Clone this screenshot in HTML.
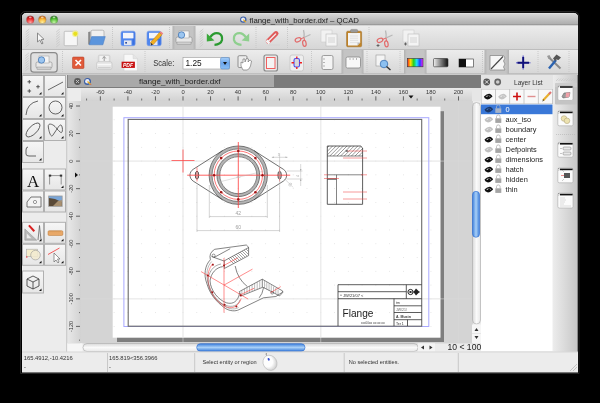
<!DOCTYPE html>
<html><head><meta charset="utf-8"><title>QCAD</title>
<style>
html,body{margin:0;padding:0;background:#000;width:600px;height:403px;overflow:hidden;}
svg{position:absolute;left:0;top:0;font-family:"Liberation Sans",sans-serif;will-change:transform;}
</style></head><body>
<svg width="600" height="403" viewBox="0 0 600 403">
<rect width="600" height="403" fill="#000"/>
<defs>
<linearGradient id="gTitle" x1="0" y1="0" x2="0" y2="1"><stop offset="0" stop-color="#d9d9d9"/><stop offset="1" stop-color="#ababab"/></linearGradient>
<linearGradient id="gTool" x1="0" y1="0" x2="0" y2="1"><stop offset="0" stop-color="#ececec"/><stop offset="1" stop-color="#d6d6d6"/></linearGradient>
<linearGradient id="gPress" x1="0" y1="0" x2="1" y2="0"><stop offset="0" stop-color="#b2b2b2"/><stop offset="0.12" stop-color="#c4c4c4"/><stop offset="0.88" stop-color="#c4c4c4"/><stop offset="1" stop-color="#b2b2b2"/></linearGradient>
<linearGradient id="gRulerH" x1="0" y1="0" x2="0" y2="1"><stop offset="0" stop-color="#e9e9e9"/><stop offset="1" stop-color="#d2d2d2"/></linearGradient>
<linearGradient id="gRulerV" x1="0" y1="0" x2="1" y2="0"><stop offset="0" stop-color="#e9e9e9"/><stop offset="1" stop-color="#d2d2d2"/></linearGradient>
<linearGradient id="gBtn" x1="0" y1="0" x2="0" y2="1"><stop offset="0" stop-color="#f6f6f6"/><stop offset="1" stop-color="#e6e6e6"/></linearGradient>
<linearGradient id="gRight" x1="0" y1="0" x2="1" y2="0"><stop offset="0" stop-color="#ececec"/><stop offset="1" stop-color="#c6c6c6"/></linearGradient>
<linearGradient id="gThumbV" x1="0" y1="0" x2="1" y2="0"><stop offset="0" stop-color="#3d7fdc"/><stop offset="0.5" stop-color="#a9d0f7"/><stop offset="1" stop-color="#3d7fdc"/></linearGradient>
<linearGradient id="gThumbH" x1="0" y1="0" x2="0" y2="1"><stop offset="0" stop-color="#3d7fdc"/><stop offset="0.5" stop-color="#a9d0f7"/><stop offset="1" stop-color="#3d7fdc"/></linearGradient>
<linearGradient id="gTrackV" x1="0" y1="0" x2="1" y2="0"><stop offset="0" stop-color="#d8d8d8"/><stop offset="0.5" stop-color="#fafafa"/><stop offset="1" stop-color="#e8e8e8"/></linearGradient>
<linearGradient id="gTrackH" x1="0" y1="0" x2="0" y2="1"><stop offset="0" stop-color="#d8d8d8"/><stop offset="0.5" stop-color="#fafafa"/><stop offset="1" stop-color="#e8e8e8"/></linearGradient>
<linearGradient id="gRainbow" x1="0" y1="0" x2="1" y2="0"><stop offset="0" stop-color="#ff2020"/><stop offset="0.2" stop-color="#ffe000"/><stop offset="0.4" stop-color="#20d020"/><stop offset="0.6" stop-color="#20e0ff"/><stop offset="0.8" stop-color="#2040ff"/><stop offset="1" stop-color="#ff20ff"/></linearGradient>
<linearGradient id="gGray" x1="0" y1="0" x2="1" y2="0"><stop offset="0" stop-color="#f0f0f0"/><stop offset="1" stop-color="#101010"/></linearGradient>
<radialGradient id="gRed" cx="0.5" cy="0.85" r="0.75"><stop offset="0" stop-color="#ffa8a8"/><stop offset="0.6" stop-color="#f03030"/><stop offset="1" stop-color="#b00808"/></radialGradient>
<radialGradient id="gYel" cx="0.5" cy="0.85" r="0.75"><stop offset="0" stop-color="#fff0a0"/><stop offset="0.6" stop-color="#f8b838"/><stop offset="1" stop-color="#c86008"/></radialGradient>
<radialGradient id="gGrn" cx="0.5" cy="0.85" r="0.75"><stop offset="0" stop-color="#c8f8a8"/><stop offset="0.6" stop-color="#58c038"/><stop offset="1" stop-color="#208010"/></radialGradient>
</defs>
<path d="M20.5 17 Q20.5 11.5 26 11.5 L573 11.5 Q579 11.5 579 17 L579 373.5 L20.5 373.5 Z" fill="none" stroke="#2e2e2e" stroke-width="0.8"/>
<path d="M22 17.5 Q22 13 26.5 13 L573.5 13 Q578 13 578 17.5 L578 372.5 L22 372.5 Z" fill="#ececec"/>
<path d="M22 17.5 Q22 13 26.5 13 L573.5 13 Q578 13 578 17.5 L578 25 L22 25 Z" fill="url(#gTitle)"/>
<line x1="26" y1="13.4" x2="574" y2="13.4" stroke="#e4e4e4" stroke-width="0.8"/>
<line x1="22" y1="25" x2="578" y2="25" stroke="#8a8a8a" stroke-width="1"/>
<circle cx="30.3" cy="19.7" r="3.9" fill="url(#gRed)" stroke="#8a8a8a" stroke-width="0.4"/>
<ellipse cx="30.3" cy="17.3" rx="1.4" ry="0.9" fill="#fff" opacity="0.6"/>
<circle cx="42.3" cy="19.7" r="3.9" fill="url(#gYel)" stroke="#8a8a8a" stroke-width="0.4"/>
<ellipse cx="42.3" cy="17.3" rx="1.4" ry="0.9" fill="#fff" opacity="0.6"/>
<circle cx="54" cy="19.7" r="3.9" fill="url(#gGrn)" stroke="#8a8a8a" stroke-width="0.4"/>
<ellipse cx="54" cy="17.3" rx="1.4" ry="0.9" fill="#fff" opacity="0.6"/>
<circle cx="243.3" cy="19.6" r="3.2" fill="#3a5ea8"/>
<circle cx="243.1" cy="19.4" r="2" fill="#e8ecf4"/>
<path d="M243.3 19.6 L245.8 22" stroke="#f0b020" stroke-width="1.2"/>
<text x="249.5" y="22.6" font-size="7.9" fill="#222" textLength="109.5" lengthAdjust="spacingAndGlyphs">flange_with_border.dxf – QCAD</text>
<rect x="22" y="25.5" width="556" height="23.5" fill="url(#gTool)"/>
<line x1="22" y1="49.5" x2="578" y2="49.5" stroke="#bdbdbd"/>
<rect x="22" y="50" width="556" height="24" fill="url(#gTool)"/>
<line x1="22" y1="74" x2="578" y2="74" stroke="#a8a8a8"/>
<path d="M25.7 32 L29.3 29 M25.7 34.5 L29.3 31.5 M25.7 37.0 L29.3 34.0 M25.7 39.5 L29.3 36.5 M25.7 42.0 L29.3 39.0 M25.7 44.5 L29.3 41.5 M25.7 47.0 L29.3 44.0 " stroke="#c6c6c6" stroke-width="0.8"/>
<path d="M56.2 32 L59.8 29 M56.2 34.5 L59.8 31.5 M56.2 37.0 L59.8 34.0 M56.2 39.5 L59.8 36.5 M56.2 42.0 L59.8 39.0 M56.2 44.5 L59.8 41.5 M56.2 47.0 L59.8 44.0 " stroke="#c6c6c6" stroke-width="0.8"/>
<line x1="112.5" y1="27" x2="112.5" y2="48" stroke="#c8c8c8" stroke-width="1" stroke-dasharray="1,1"/>
<line x1="169.5" y1="27" x2="169.5" y2="48" stroke="#c8c8c8" stroke-width="1" stroke-dasharray="1,1"/>
<path d="M199.7 32 L203.3 29 M199.7 34.5 L203.3 31.5 M199.7 37.0 L203.3 34.0 M199.7 39.5 L203.3 36.5 M199.7 42.0 L203.3 39.0 M199.7 44.5 L203.3 41.5 M199.7 47.0 L203.3 44.0 " stroke="#c6c6c6" stroke-width="0.8"/>
<line x1="256" y1="27" x2="256" y2="48" stroke="#c8c8c8" stroke-width="1" stroke-dasharray="1,1"/>
<line x1="287.5" y1="27" x2="287.5" y2="48" stroke="#c8c8c8" stroke-width="1" stroke-dasharray="1,1"/>
<line x1="369" y1="27" x2="369" y2="48" stroke="#c8c8c8" stroke-width="1" stroke-dasharray="1,1"/>
<rect x="172.5" y="26" width="23" height="23" fill="url(#gPress)"/>
<path d="M25.2 56 L28.8 53 M25.2 58.5 L28.8 55.5 M25.2 61.0 L28.8 58.0 M25.2 63.5 L28.8 60.5 M25.2 66.0 L28.8 63.0 M25.2 68.5 L28.8 65.5 M25.2 71.0 L28.8 68.0 " stroke="#c6c6c6" stroke-width="0.8"/>
<line x1="62.5" y1="51" x2="62.5" y2="73" stroke="#c8c8c8" stroke-width="1" stroke-dasharray="1,1"/>
<line x1="145" y1="51" x2="145" y2="73" stroke="#c8c8c8" stroke-width="1" stroke-dasharray="1,1"/>
<line x1="311.5" y1="51" x2="311.5" y2="73" stroke="#c8c8c8" stroke-width="1" stroke-dasharray="1,1"/>
<line x1="367" y1="51" x2="367" y2="73" stroke="#c8c8c8" stroke-width="1" stroke-dasharray="1,1"/>
<line x1="400" y1="51" x2="400" y2="73" stroke="#c8c8c8" stroke-width="1" stroke-dasharray="1,1"/>
<line x1="482.5" y1="51" x2="482.5" y2="73" stroke="#c8c8c8" stroke-width="1" stroke-dasharray="1,1"/>
<line x1="538" y1="51" x2="538" y2="73" stroke="#c8c8c8" stroke-width="1" stroke-dasharray="1,1"/>
<line x1="569" y1="51" x2="569" y2="73" stroke="#c8c8c8" stroke-width="1" stroke-dasharray="1,1"/>
<rect x="30.8" y="52.6" width="26.4" height="19.6" rx="3" fill="#e0e0e0" stroke="#8a8a8a" stroke-width="1.2"/>
<rect x="264" y="55" width="13.5" height="16" rx="2" fill="#eaeaea" stroke="#8a8a8a" stroke-width="1.2"/>
<rect x="290" y="55" width="13.5" height="16" rx="2" fill="#eeeeee" stroke="#c4c4c4" stroke-width="0.8"/>
<rect x="341.5" y="50" width="22" height="24" fill="url(#gPress)"/>
<rect x="404" y="50" width="22.5" height="24" fill="url(#gPress)"/>
<rect x="484.5" y="50" width="24.5" height="24" fill="url(#gPress)"/>
<path d="M37.5 33 L37.5 42 L39.8 40 L41.8 44 L43 43.3 L41.2 39.5 L44 39.3 Z" fill="#f8f8f8" stroke="#808080" stroke-width="0.9" stroke-linejoin="round"/>
<rect x="64.2" y="31.3" width="13.2" height="14.4" rx="0.8" fill="#f6f6f6" stroke="#b0b0b0" stroke-width="0.7"/>
<circle cx="75.3" cy="33.8" r="3.2" fill="#f4f080" opacity="0.8"/>
<circle cx="75.3" cy="33.8" r="2.1" fill="#e8e020"/>
<path d="M88.2 32 L90.5 31.5 L90.5 44.5 L88.2 44.5 Z" fill="#888"/>
<rect x="91" y="30.2" width="13" height="8" rx="1.5" fill="#f0f0f0" stroke="#9a9a9a" stroke-width="0.6"/>
<path d="M91.6 36.6 L105.3 36.6 L102.9 44.8 L89.2 44.8 Z" fill="#5b95dd" stroke="#4478c0" stroke-width="0.5"/>
<rect x="121" y="31.2" width="14.2" height="14.5" rx="1.8" fill="#4f86ee" stroke="#6f96e6" stroke-width="0.6"/>
<rect x="132.5" y="32.2" width="2" height="12.5" fill="#3a70e0"/>
<rect x="123" y="32.8" width="10.5" height="5.6" fill="#f2f4fa"/>
<rect x="124" y="40.4" width="7.5" height="4.8" fill="#e4e6ee"/>
<rect x="125.3" y="42.0" width="1.6" height="1.6" fill="#1a40a0"/>
<rect x="147" y="31.2" width="14.2" height="14.5" rx="1.8" fill="#4f86ee" stroke="#6f96e6" stroke-width="0.6"/>
<rect x="158.5" y="32.2" width="2" height="12.5" fill="#3a70e0"/>
<rect x="149" y="32.8" width="10.5" height="5.6" fill="#f2f4fa"/>
<rect x="150" y="40.4" width="7.5" height="4.8" fill="#e4e6ee"/>
<rect x="151.3" y="42.0" width="1.6" height="1.6" fill="#1a40a0"/>
<path d="M150.5 42.5 L159.5 32.5 L162 34.8 L153 44.8 Z" fill="#f2b020" stroke="#c07000" stroke-width="0.5"/>
<path d="M159.5 32.5 L160.8 31.2 L163.3 33.5 L162 34.8 Z" fill="#f08080"/>
<path d="M150.5 42.5 L153 44.8 L150.8 45.5 Z" fill="#333"/>
<rect x="176" y="37" width="16" height="6" rx="1.5" fill="#e8e8e8" stroke="#888" stroke-width="0.6"/>
<rect x="179" y="31" width="10" height="7" fill="#f4f4f4" stroke="#999" stroke-width="0.5"/>
<rect x="177" y="42" width="14" height="2.5" fill="#cfcfcf" stroke="#888" stroke-width="0.4"/>
<circle cx="181.5" cy="35" r="3.2" fill="#9cc6f0" stroke="#3a6fb0" stroke-width="0.7"/>
<path d="M210 37.5 Q213.5 32 218.5 33.3 Q222.8 35 222 40 Q220.8 44.5 214.5 44.8" fill="none" stroke="#2a9a30" stroke-width="2.3"/>
<path d="M206.8 33.6 L214.4 40.6 L206.8 41.4 Z" fill="#3aa83a"/>
<path d="M246 37.5 Q242.5 32 237.5 33.3 Q233.2 35 234 40 Q235.2 44.5 241.5 44.8" fill="none" stroke="#8ecf8e" stroke-width="2.3"/>
<path d="M249.2 33.6 L241.6 40.6 L249.2 41.4 Z" fill="#8ecf8e"/>
<path d="M268.3 41.3 L276 33.6" stroke="#e05a5a" stroke-width="5" stroke-linecap="round"/>
<path d="M268.3 41.3 L276 33.6" stroke="#f4f4f4" stroke-width="1.3"/>
<path d="M266.5 40.5 L269.5 43.5" stroke="#f2f2f2" stroke-width="2.5"/>
<path d="M268 45 L280 45" stroke="#d0d0d0" stroke-width="0.6"/>
<path d="M303.5 30 Q304.5 34 304 37.5 M310.5 34.5 L304 37.5" fill="none" stroke="#b8b8b8" stroke-width="1.3"/>
<ellipse cx="298" cy="39.8" rx="3" ry="1.9" transform="rotate(-25 298 39.8)" fill="none" stroke="#e26a6a" stroke-width="1.2"/>
<ellipse cx="304.4" cy="43.4" rx="1.7" ry="3" transform="rotate(-10 304.4 43.4)" fill="none" stroke="#e26a6a" stroke-width="1.2"/>
<path d="M300.5 39 L304 37.5 L304.5 40.5" fill="none" stroke="#e26a6a" stroke-width="1"/>
<rect x="321" y="30" width="11" height="12" fill="#f2f2f2" stroke="#ccc" stroke-width="0.6"/>
<rect x="326" y="34" width="11" height="12" fill="#f4f4f4" stroke="#bbb" stroke-width="0.6"/>
<rect x="328" y="37" width="7" height="6" fill="#e4e4e4"/>
<rect x="346.6" y="31.2" width="15" height="15.6" rx="1.2" fill="#c08428" stroke="#9a6418" stroke-width="0.5"/>
<path d="M348 33 H360.2 V42.5 L357.5 45.4 H348 Z" fill="#f4f4f4"/>
<path d="M357.5 45.4 L357.5 42.5 L360.2 42.5 Z" fill="#bbb"/>
<rect x="350.5" y="29.4" width="7.2" height="3.2" rx="1.2" fill="#9a9a9a" stroke="#777" stroke-width="0.4"/>
<line x1="350" y1="36" x2="358" y2="36" stroke="#d4d4d4" stroke-width="0.6"/>
<line x1="350" y1="38.2" x2="358" y2="38.2" stroke="#d4d4d4" stroke-width="0.6"/>
<line x1="350" y1="40.4" x2="358" y2="40.4" stroke="#d4d4d4" stroke-width="0.6"/>
<line x1="350" y1="42.6" x2="358" y2="42.6" stroke="#d4d4d4" stroke-width="0.6"/>
<path d="M385.5 30.5 Q386.5 34.5 386 38.0 M392.5 35.0 L386 38.0" fill="none" stroke="#b8b8b8" stroke-width="1.3"/>
<ellipse cx="380" cy="40.3" rx="3" ry="1.9" transform="rotate(-25 380 40.3)" fill="none" stroke="#e26a6a" stroke-width="1.2"/>
<ellipse cx="386.4" cy="43.9" rx="1.7" ry="3" transform="rotate(-10 386.4 43.9)" fill="none" stroke="#e26a6a" stroke-width="1.2"/>
<path d="M382.5 39.5 L386 38.0 L386.5 41.0" fill="none" stroke="#e26a6a" stroke-width="1"/>
<path d="M376.5 45.5 h3 M378 44.0 v3" stroke="#444" stroke-width="0.7"/>
<rect x="403" y="30" width="11" height="12" fill="#f2f2f2" stroke="#ccc" stroke-width="0.6"/>
<rect x="408" y="34" width="11" height="12" fill="#f4f4f4" stroke="#bbb" stroke-width="0.6"/>
<rect x="410" y="37" width="7" height="6" fill="#e4e4e4"/>
<path d="M404 44 h3 M405.5 42.5 v3" stroke="#444" stroke-width="0.7"/>
<rect x="36" y="62" width="16" height="6" rx="1.5" fill="#e8e8e8" stroke="#888" stroke-width="0.6"/>
<rect x="39" y="56" width="10" height="7" fill="#f4f4f4" stroke="#999" stroke-width="0.5"/>
<rect x="37" y="67" width="14" height="2.5" fill="#cfcfcf" stroke="#888" stroke-width="0.4"/>
<circle cx="41.5" cy="60" r="3.2" fill="#9cc6f0" stroke="#3a6fb0" stroke-width="0.7"/>
<rect x="72.5" y="57" width="11.5" height="11.5" rx="1" fill="#e05a3a" stroke="#b03a20" stroke-width="0.5"/>
<path d="M75.5 60 L81 65.5 M81 60 L75.5 65.5" stroke="#fff" stroke-width="1.6"/>
<rect x="98.3" y="55" width="11.7" height="7.5" rx="1.5" fill="#dcdcdc" stroke="#c4c4c4" stroke-width="0.5"/>
<rect x="99.5" y="56" width="9.3" height="5.5" fill="#f2f2f2"/>
<path d="M104.2 56.5 V61 M102.5 58.5 L104.2 56.5 L105.9 58.5" stroke="#9a9a9a" stroke-width="1" fill="none"/>
<rect x="96.6" y="61.7" width="15.4" height="7.9" rx="2" fill="#e8e8e8" stroke="#c0c0c0" stroke-width="0.6"/>
<rect x="97.5" y="64" width="13.6" height="1.2" fill="#f8f8f8"/>
<rect x="98" y="67" width="12.6" height="1.5" fill="#cfcfcf"/>
<path d="M124 54.3 L133 54.3 L137.4 58.7 L137.4 70.8 L124 70.8 Z" fill="#f8f8f8" stroke="#d0d0d0" stroke-width="0.6"/>
<path d="M133 54.3 L133 58.7 L137.4 58.7" fill="#e4e4e4" stroke="#d0d0d0" stroke-width="0.4"/>
<rect x="121.6" y="61.7" width="13.3" height="6.2" fill="#c81010"/>
<text x="123" y="66.8" font-size="5.2" font-weight="bold" font-style="italic" fill="#fff" textLength="10" lengthAdjust="spacingAndGlyphs">PDF</text>
<text x="153.3" y="66" font-size="8.6" fill="#333" textLength="21" lengthAdjust="spacingAndGlyphs">Scale:</text>
<rect x="183" y="57.5" width="46.5" height="11.5" fill="#fff" stroke="#9a9a9a" stroke-width="0.6"/>
<defs><linearGradient id="gDrop" x1="0" y1="0" x2="0" y2="1"><stop offset="0" stop-color="#a8d0f8"/><stop offset="0.5" stop-color="#6aa4ec"/><stop offset="1" stop-color="#8cc0f4"/></linearGradient></defs>
<rect x="220.5" y="57.5" width="9" height="11.5" rx="1.5" fill="url(#gDrop)" stroke="#4a7fc0" stroke-width="0.5"/>
<path d="M223 62 L227 62 L225 65 Z" fill="#111"/>
<text x="185.5" y="66.3" font-size="8.3" fill="#111">1.25</text>
<rect x="238" y="55.7" width="9" height="11.8" rx="1.2" fill="#ececec" stroke="#7a7a7a" stroke-width="0.8"/>
<path d="M243 70 Q240 66 241 62 L243 63 L243 59 L245 59 L245 62 L246.5 58.5 L248.5 59 L248 62 L250 60 L251.5 61 L250.5 66 Q249 70 247 70 Z" fill="#fff" stroke="#666" stroke-width="0.6"/>
<rect x="266.5" y="57.5" width="8.5" height="11" fill="#f4f4f4" stroke="#f06060" stroke-width="1"/>
<rect x="294" y="58.5" width="5.5" height="8.5" rx="1.8" fill="#d8d8d8" stroke="#4a4af0" stroke-width="1.1"/>
<path d="M296.8 56.5 v2 M296.8 67 v2 M291.5 62.8 h2.5 M299.5 62.8 h2.5" stroke="#f02020" stroke-width="1.4"/>
<rect x="322" y="55.5" width="11" height="14" rx="1.5" fill="#f4f4f4" stroke="#888" stroke-width="0.8"/>
<path d="M323 59 h2 M323 62.5 h2 M323 66 h2" stroke="#888" stroke-width="0.6"/>
<rect x="346" y="57" width="14.5" height="11" rx="1.5" fill="#f8f8f8" stroke="#888" stroke-width="0.8"/>
<path d="M350 58 v2 M353.2 58 v2 M356.5 58 v2" stroke="#888" stroke-width="0.6"/>
<rect x="376" y="55" width="9" height="11" fill="#f4f4f4" stroke="#999" stroke-width="0.6"/>
<circle cx="384" cy="64" r="3.8" fill="#8cc0f0" stroke="#3a70b0" stroke-width="0.8"/>
<path d="M386.5 66.5 L390.5 70" stroke="#333" stroke-width="1.4"/>
<rect x="407.5" y="58.5" width="15.5" height="8.3" fill="url(#gRainbow)" stroke="#333" stroke-width="0.6"/>
<rect x="433.5" y="58.5" width="14.5" height="8.3" rx="1" fill="url(#gGray)" stroke="#333" stroke-width="0.6"/>
<rect x="459" y="59" width="14.5" height="8" fill="#fff" stroke="#333" stroke-width="0.6"/>
<rect x="459" y="59" width="7" height="8" fill="#111"/>
<path d="M490 55.5 H503.5 L505 58 L503.5 61 L505 64 L503.5 67 L505 70 H490 Z" fill="#f6f6f6" stroke="#8a8a8a" stroke-width="0.8"/>
<path d="M491 69 L503 56.5" stroke="#444" stroke-width="1.1"/>
<path d="M516 62.7 h14.5 M523.2 55.5 v14" stroke="#8080d0" stroke-width="1.6"/>
<path d="M517.5 62.7 h11.5 M523.2 57 v11" stroke="#10107a" stroke-width="1.9"/>
<path d="M549 57.5 L560.5 68.5" stroke="#8a8a8a" stroke-width="2"/>
<path d="M547 56 L549.5 55 L551 58 L548.5 59 Z" fill="#999"/>
<path d="M549 68.5 L556 60" stroke="#2a62b0" stroke-width="2.4"/>
<path d="M553 58.5 L556.5 54.5 L561 57.5 L558.5 60 L556 59.5 L555.5 61.5 Z" fill="#555"/>
<rect x="22" y="75" width="45" height="277" fill="#ececec"/>
<rect x="67" y="75" width="414" height="13" fill="#7b7b7b"/>
<rect x="67" y="75" width="207" height="12" fill="#a9a9a9"/>
<line x1="67.4" y1="75" x2="67.4" y2="87" stroke="#777" stroke-width="0.8"/>
<circle cx="77.5" cy="81.5" r="3.4" fill="#5a5a5a"/>
<path d="M76 80 L79 83 M79 80 L76 83" stroke="#c8c8c8" stroke-width="0.9"/>
<circle cx="87.5" cy="81.5" r="3.5" fill="#3a5ea8"/>
<circle cx="87.3" cy="81.3" r="2.2" fill="#e8ecf4"/>
<path d="M87.5 81.5 L90.5 84.2" stroke="#f0b020" stroke-width="1.4"/>
<circle cx="90.8" cy="84.5" r="0.6" fill="#e06040"/>
<text x="139" y="83.6" font-size="8.1" fill="#222">flange_with_border.dxf</text>
<rect x="67" y="88" width="406" height="264" fill="#d4d4d4"/>
<rect x="81" y="88" width="391" height="13" fill="url(#gRulerH)"/>
<rect x="67" y="101" width="14" height="243" fill="url(#gRulerV)"/>
<rect x="67" y="88" width="14" height="13" fill="#ececec"/>
<line x1="66.75" y1="88" x2="66.75" y2="352" stroke="#c4c4c4" stroke-width="1"/>
<line x1="86.58" y1="98.5" x2="86.58" y2="100.5" stroke="#555" stroke-width="0.8"/>
<line x1="100.35" y1="96.3" x2="100.35" y2="100.5" stroke="#444" stroke-width="0.8"/>
<text x="100.35" y="93.6" font-size="5.8" fill="#333" text-anchor="middle">-60</text>
<line x1="114.12" y1="98.5" x2="114.12" y2="100.5" stroke="#555" stroke-width="0.8"/>
<line x1="127.9" y1="96.3" x2="127.9" y2="100.5" stroke="#444" stroke-width="0.8"/>
<text x="127.9" y="93.6" font-size="5.8" fill="#333" text-anchor="middle">-40</text>
<line x1="141.68" y1="98.5" x2="141.68" y2="100.5" stroke="#555" stroke-width="0.8"/>
<line x1="155.45" y1="96.3" x2="155.45" y2="100.5" stroke="#444" stroke-width="0.8"/>
<text x="155.45" y="93.6" font-size="5.8" fill="#333" text-anchor="middle">-20</text>
<line x1="169.22" y1="98.5" x2="169.22" y2="100.5" stroke="#555" stroke-width="0.8"/>
<line x1="183" y1="96.3" x2="183" y2="100.5" stroke="#444" stroke-width="0.8"/>
<text x="183" y="93.6" font-size="5.8" fill="#333" text-anchor="middle">0</text>
<line x1="196.78" y1="98.5" x2="196.78" y2="100.5" stroke="#555" stroke-width="0.8"/>
<line x1="210.55" y1="96.3" x2="210.55" y2="100.5" stroke="#444" stroke-width="0.8"/>
<text x="210.55" y="93.6" font-size="5.8" fill="#333" text-anchor="middle">20</text>
<line x1="224.32" y1="98.5" x2="224.32" y2="100.5" stroke="#555" stroke-width="0.8"/>
<line x1="238.1" y1="96.3" x2="238.1" y2="100.5" stroke="#444" stroke-width="0.8"/>
<text x="238.1" y="93.6" font-size="5.8" fill="#333" text-anchor="middle">40</text>
<line x1="251.88" y1="98.5" x2="251.88" y2="100.5" stroke="#555" stroke-width="0.8"/>
<line x1="265.65" y1="96.3" x2="265.65" y2="100.5" stroke="#444" stroke-width="0.8"/>
<text x="265.65" y="93.6" font-size="5.8" fill="#333" text-anchor="middle">60</text>
<line x1="279.43" y1="98.5" x2="279.43" y2="100.5" stroke="#555" stroke-width="0.8"/>
<line x1="293.2" y1="96.3" x2="293.2" y2="100.5" stroke="#444" stroke-width="0.8"/>
<text x="293.2" y="93.6" font-size="5.8" fill="#333" text-anchor="middle">80</text>
<line x1="306.98" y1="98.5" x2="306.98" y2="100.5" stroke="#555" stroke-width="0.8"/>
<line x1="320.75" y1="96.3" x2="320.75" y2="100.5" stroke="#444" stroke-width="0.8"/>
<text x="320.75" y="93.6" font-size="5.8" fill="#333" text-anchor="middle">100</text>
<line x1="334.52" y1="98.5" x2="334.52" y2="100.5" stroke="#555" stroke-width="0.8"/>
<line x1="348.3" y1="96.3" x2="348.3" y2="100.5" stroke="#444" stroke-width="0.8"/>
<text x="348.3" y="93.6" font-size="5.8" fill="#333" text-anchor="middle">120</text>
<line x1="362.07" y1="98.5" x2="362.07" y2="100.5" stroke="#555" stroke-width="0.8"/>
<line x1="375.85" y1="96.3" x2="375.85" y2="100.5" stroke="#444" stroke-width="0.8"/>
<text x="375.85" y="93.6" font-size="5.8" fill="#333" text-anchor="middle">140</text>
<line x1="389.62" y1="98.5" x2="389.62" y2="100.5" stroke="#555" stroke-width="0.8"/>
<line x1="403.4" y1="96.3" x2="403.4" y2="100.5" stroke="#444" stroke-width="0.8"/>
<text x="403.4" y="93.6" font-size="5.8" fill="#333" text-anchor="middle">160</text>
<line x1="417.17" y1="98.5" x2="417.17" y2="100.5" stroke="#555" stroke-width="0.8"/>
<line x1="430.95" y1="96.3" x2="430.95" y2="100.5" stroke="#444" stroke-width="0.8"/>
<text x="430.95" y="93.6" font-size="5.8" fill="#333" text-anchor="middle">180</text>
<line x1="444.72" y1="98.5" x2="444.72" y2="100.5" stroke="#555" stroke-width="0.8"/>
<line x1="458.5" y1="96.3" x2="458.5" y2="100.5" stroke="#444" stroke-width="0.8"/>
<text x="458.5" y="93.6" font-size="5.8" fill="#333" text-anchor="middle">200</text>
<line x1="76" y1="106" x2="80" y2="106" stroke="#444" stroke-width="0.8"/>
<text x="0" y="0" font-size="5.6" fill="#333" text-anchor="middle" transform="translate(73.3 106) rotate(-90)">40</text>
<line x1="79" y1="119.78" x2="80" y2="119.78" stroke="#333" stroke-width="0.7"/>
<line x1="76" y1="133.55" x2="80" y2="133.55" stroke="#444" stroke-width="0.8"/>
<text x="0" y="0" font-size="5.6" fill="#333" text-anchor="middle" transform="translate(73.3 133.55) rotate(-90)">20</text>
<line x1="79" y1="147.32" x2="80" y2="147.32" stroke="#333" stroke-width="0.7"/>
<line x1="76" y1="161.1" x2="80" y2="161.1" stroke="#444" stroke-width="0.8"/>
<text x="0" y="0" font-size="5.6" fill="#333" text-anchor="middle" transform="translate(73.3 161.1) rotate(-90)">0</text>
<line x1="79" y1="174.88" x2="80" y2="174.88" stroke="#333" stroke-width="0.7"/>
<line x1="76" y1="188.65" x2="80" y2="188.65" stroke="#444" stroke-width="0.8"/>
<text x="0" y="0" font-size="5.6" fill="#333" text-anchor="middle" transform="translate(73.3 188.65) rotate(-90)">-20</text>
<line x1="79" y1="202.42" x2="80" y2="202.42" stroke="#333" stroke-width="0.7"/>
<line x1="76" y1="216.2" x2="80" y2="216.2" stroke="#444" stroke-width="0.8"/>
<text x="0" y="0" font-size="5.6" fill="#333" text-anchor="middle" transform="translate(73.3 216.2) rotate(-90)">-40</text>
<line x1="79" y1="229.97" x2="80" y2="229.97" stroke="#333" stroke-width="0.7"/>
<line x1="76" y1="243.75" x2="80" y2="243.75" stroke="#444" stroke-width="0.8"/>
<text x="0" y="0" font-size="5.6" fill="#333" text-anchor="middle" transform="translate(73.3 243.75) rotate(-90)">-60</text>
<line x1="79" y1="257.52" x2="80" y2="257.52" stroke="#333" stroke-width="0.7"/>
<line x1="76" y1="271.3" x2="80" y2="271.3" stroke="#444" stroke-width="0.8"/>
<text x="0" y="0" font-size="5.6" fill="#333" text-anchor="middle" transform="translate(73.3 271.3) rotate(-90)">-80</text>
<line x1="79" y1="285.07" x2="80" y2="285.07" stroke="#333" stroke-width="0.7"/>
<line x1="76" y1="298.85" x2="80" y2="298.85" stroke="#444" stroke-width="0.8"/>
<text x="0" y="0" font-size="5.6" fill="#333" text-anchor="middle" transform="translate(73.3 298.85) rotate(-90)">-100</text>
<line x1="79" y1="312.62" x2="80" y2="312.62" stroke="#333" stroke-width="0.7"/>
<line x1="76" y1="326.4" x2="80" y2="326.4" stroke="#444" stroke-width="0.8"/>
<text x="0" y="0" font-size="5.6" fill="#333" text-anchor="middle" transform="translate(73.3 326.4) rotate(-90)">-120</text>
<line x1="79" y1="340.17" x2="80" y2="340.17" stroke="#333" stroke-width="0.7"/>
<path d="M408.5 95.5 h5 l-2.5 3 z" fill="#111"/>
<path d="M75 172.5 v5 l3 -2.5 z" fill="#111"/>
<rect x="117" y="111.2" width="327" height="230.8" fill="#7e7e7e"/>
<rect x="112.7" y="106.7" width="327.8" height="231" fill="#ffffff"/>
<rect x="472" y="88" width="9" height="13" fill="#e6e6e6"/>
<rect x="472.5" y="102.5" width="8" height="221.5" rx="4" fill="url(#gTrackV)" stroke="#a8a8a8" stroke-width="0.6"/>
<rect x="472.5" y="191.3" width="7" height="46" rx="3.5" fill="url(#gThumbV)" stroke="#2a6ad0" stroke-width="0.6"/>
<rect x="472" y="324.5" width="9" height="18.5" fill="#f6f6f6"/>
<line x1="472" y1="333.5" x2="481" y2="333.5" stroke="#dedede" stroke-width="0.6"/>
<path d="M474.5 331 h4 l-2 -3 z M474.5 336 h4 l-2 3 z" fill="#333"/>
<rect x="67" y="343.5" width="406" height="8.5" fill="#ececec"/>
<rect x="67.5" y="343.3" width="15" height="8.5" fill="#f6f6f6"/>
<line x1="68" y1="343.3" x2="80" y2="343.3" stroke="#e0e0e0" stroke-width="0.6"/>
<rect x="83" y="343.5" width="335" height="8" rx="4" fill="url(#gTrackH)" stroke="#a8a8a8" stroke-width="0.6"/>
<rect x="196.7" y="343.7" width="108.3" height="7.5" rx="3.7" fill="url(#gThumbH)" stroke="#2a6ad0" stroke-width="0.6"/>
<rect x="418" y="343.3" width="17" height="8" fill="#f4f4f4"/>
<path d="M424 345.5 v4 l-3 -2 z M429.5 345.5 v4 l3 -2 z" fill="#333"/>
<text x="447.5" y="350" font-size="8.6" fill="#222">10 &lt; 100</text>
<rect x="481" y="75" width="72" height="277" fill="#ececec"/>
<rect x="481" y="75" width="72" height="14" fill="#e4e4e4"/>
<circle cx="486.7" cy="82" r="3.4" fill="#555"/>
<path d="M485 80.3 L488.4 83.7 M488.4 80.3 L485 83.7" stroke="#eee" stroke-width="0.9"/>
<circle cx="497.7" cy="82" r="3.4" fill="#666"/>
<circle cx="497.7" cy="82" r="1.8" fill="#ccc"/>
<text x="514" y="85" font-size="6.9" fill="#333" textLength="28.5" lengthAdjust="spacingAndGlyphs">Layer List</text>
<rect x="481" y="89" width="72" height="15" fill="#bdbdbd"/>
<rect x="481.5" y="89.5" width="13.5" height="14" fill="#f8f8f8"/>
<rect x="495.8" y="89.5" width="13.5" height="14" fill="#f8f8f8"/>
<rect x="510.1" y="89.5" width="13.5" height="14" fill="#f8f8f8"/>
<rect x="524.4" y="89.5" width="13.5" height="14" fill="#f8f8f8"/>
<rect x="538.7" y="89.5" width="13.5" height="14" fill="#f8f8f8"/>
<path d="M483.9 96.5 Q487.2 93.1 490.2 93.9 Q492.2 94.9 492.5 96.5 Q489.2 99.9 486.7 99.3 Q484.2 98.5 483.9 96.5 Z" fill="#111"/>
<path d="M485.59999999999997 96.2 Q488.2 94.7 490.8 96.2 Q488.2 97.7 485.59999999999997 96.2 Z" fill="#e8e8e8"/>
<circle cx="488.5" cy="96.6" r="1.1" fill="#111"/>
<path d="M498.2 96.5 Q501.5 93.1 504.5 93.9 Q506.5 94.9 506.8 96.5 Q503.5 99.9 501.0 99.3 Q498.5 98.5 498.2 96.5 Z" fill="#c4c4c4"/>
<path d="M499.9 96.2 Q502.5 94.7 505.1 96.2 Q502.5 97.7 499.9 96.2 Z" fill="#f2f2f2"/>
<circle cx="502.8" cy="96.6" r="1.1" fill="#c4c4c4"/>
<path d="M513 96.5 h8 M517 92.5 v8" stroke="#cc1010" stroke-width="1.6"/>
<path d="M527.5 96.5 h8" stroke="#e09090" stroke-width="1.4"/>
<path d="M543 100.5 L549.5 93.5" stroke="#e8b030" stroke-width="2.2"/>
<path d="M549 94 L551 92" stroke="#e07070" stroke-width="2.2"/>
<path d="M542 101.8 L543.5 99.2 L544.3 100 Z" fill="#333"/>
<rect x="481" y="104" width="71.5" height="247" fill="#ffffff"/>
<rect x="481" y="104.5" width="71.5" height="9.7" fill="#3a78d8"/>
<path d="M484.5 109.5 Q487.8 106.1 490.8 106.9 Q492.8 107.9 493.1 109.5 Q489.8 112.9 487.3 112.3 Q484.8 111.5 484.5 109.5 Z" fill="#1c3868"/>
<path d="M486.2 109.2 Q488.8 107.7 491.40000000000003 109.2 Q488.8 110.7 486.2 109.2 Z" fill="#4a80d0"/>
<circle cx="489.1" cy="109.6" r="1.1" fill="#1c3868"/>
<rect x="495.3" y="108.3" width="6" height="4.6" fill="#a8b4c8"/>
<path d="M496.5 108.3 v-1.6 a1.8 1.8 0 0 1 3.6 0 v1.6" fill="none" stroke="#a8b4c8" stroke-width="0.8"/>
<text x="505.6" y="112.2" font-size="7.4" fill="#fff">0</text>
<path d="M484.5 119.5 Q487.8 116.1 490.8 116.9 Q492.8 117.9 493.1 119.5 Q489.8 122.9 487.3 122.3 Q484.8 121.5 484.5 119.5 Z" fill="#c0c0c0"/>
<path d="M486.2 119.2 Q488.8 117.7 491.40000000000003 119.2 Q488.8 120.7 486.2 119.2 Z" fill="#f0f0f0"/>
<circle cx="489.1" cy="119.6" r="1.1" fill="#c0c0c0"/>
<rect x="495.3" y="118.3" width="6" height="4.6" fill="#a4a4a4"/>
<path d="M496.5 118.3 v-1.6 a1.8 1.8 0 0 1 3.6 0 v1.6" fill="none" stroke="#b4b4b4" stroke-width="0.8"/>
<text x="505.6" y="122.2" font-size="7.4" fill="#222">aux_iso</text>
<path d="M484.5 129.5 Q487.8 126.1 490.8 126.9 Q492.8 127.9 493.1 129.5 Q489.8 132.9 487.3 132.3 Q484.8 131.5 484.5 129.5 Z" fill="#c0c0c0"/>
<path d="M486.2 129.2 Q488.8 127.7 491.40000000000003 129.2 Q488.8 130.7 486.2 129.2 Z" fill="#f0f0f0"/>
<circle cx="489.1" cy="129.6" r="1.1" fill="#c0c0c0"/>
<rect x="495.3" y="128.3" width="6" height="4.6" fill="#a4a4a4"/>
<path d="M496.5 128.3 v-1.6 a1.8 1.8 0 0 1 3.6 0 v1.6" fill="none" stroke="#b4b4b4" stroke-width="0.8"/>
<text x="505.6" y="132.2" font-size="7.4" fill="#222">boundary</text>
<path d="M484.5 139.5 Q487.8 136.1 490.8 136.9 Q492.8 137.9 493.1 139.5 Q489.8 142.9 487.3 142.3 Q484.8 141.5 484.5 139.5 Z" fill="#111"/>
<path d="M486.2 139.2 Q488.8 137.7 491.40000000000003 139.2 Q488.8 140.7 486.2 139.2 Z" fill="#f4f4f4"/>
<circle cx="489.1" cy="139.6" r="1.1" fill="#111"/>
<rect x="495.3" y="138.3" width="6" height="4.6" fill="#a4a4a4"/>
<path d="M496.5 138.3 v-1.6 a1.8 1.8 0 0 1 3.6 0 v1.6" fill="none" stroke="#b4b4b4" stroke-width="0.8"/>
<text x="505.6" y="142.2" font-size="7.4" fill="#222">center</text>
<path d="M484.5 149.5 Q487.8 146.1 490.8 146.9 Q492.8 147.9 493.1 149.5 Q489.8 152.9 487.3 152.3 Q484.8 151.5 484.5 149.5 Z" fill="#c0c0c0"/>
<path d="M486.2 149.2 Q488.8 147.7 491.40000000000003 149.2 Q488.8 150.7 486.2 149.2 Z" fill="#f0f0f0"/>
<circle cx="489.1" cy="149.6" r="1.1" fill="#c0c0c0"/>
<rect x="495.3" y="148.3" width="6" height="4.6" fill="#a4a4a4"/>
<path d="M496.5 148.3 v-1.6 a1.8 1.8 0 0 1 3.6 0 v1.6" fill="none" stroke="#b4b4b4" stroke-width="0.8"/>
<text x="505.6" y="152.2" font-size="7.4" fill="#222">Defpoints</text>
<path d="M484.5 159.5 Q487.8 156.1 490.8 156.9 Q492.8 157.9 493.1 159.5 Q489.8 162.9 487.3 162.3 Q484.8 161.5 484.5 159.5 Z" fill="#111"/>
<path d="M486.2 159.2 Q488.8 157.7 491.40000000000003 159.2 Q488.8 160.7 486.2 159.2 Z" fill="#f4f4f4"/>
<circle cx="489.1" cy="159.6" r="1.1" fill="#111"/>
<rect x="495.3" y="158.3" width="6" height="4.6" fill="#a4a4a4"/>
<path d="M496.5 158.3 v-1.6 a1.8 1.8 0 0 1 3.6 0 v1.6" fill="none" stroke="#b4b4b4" stroke-width="0.8"/>
<text x="505.6" y="162.2" font-size="7.4" fill="#222">dimensions</text>
<path d="M484.5 169.5 Q487.8 166.1 490.8 166.9 Q492.8 167.9 493.1 169.5 Q489.8 172.9 487.3 172.3 Q484.8 171.5 484.5 169.5 Z" fill="#111"/>
<path d="M486.2 169.2 Q488.8 167.7 491.40000000000003 169.2 Q488.8 170.7 486.2 169.2 Z" fill="#f4f4f4"/>
<circle cx="489.1" cy="169.6" r="1.1" fill="#111"/>
<rect x="495.3" y="168.3" width="6" height="4.6" fill="#a4a4a4"/>
<path d="M496.5 168.3 v-1.6 a1.8 1.8 0 0 1 3.6 0 v1.6" fill="none" stroke="#b4b4b4" stroke-width="0.8"/>
<text x="505.6" y="172.2" font-size="7.4" fill="#222">hatch</text>
<path d="M484.5 179.5 Q487.8 176.1 490.8 176.9 Q492.8 177.9 493.1 179.5 Q489.8 182.9 487.3 182.3 Q484.8 181.5 484.5 179.5 Z" fill="#111"/>
<path d="M486.2 179.2 Q488.8 177.7 491.40000000000003 179.2 Q488.8 180.7 486.2 179.2 Z" fill="#f4f4f4"/>
<circle cx="489.1" cy="179.6" r="1.1" fill="#111"/>
<rect x="495.3" y="178.3" width="6" height="4.6" fill="#a4a4a4"/>
<path d="M496.5 178.3 v-1.6 a1.8 1.8 0 0 1 3.6 0 v1.6" fill="none" stroke="#b4b4b4" stroke-width="0.8"/>
<text x="505.6" y="182.2" font-size="7.4" fill="#222">hidden</text>
<path d="M484.5 189.5 Q487.8 186.1 490.8 186.9 Q492.8 187.9 493.1 189.5 Q489.8 192.9 487.3 192.3 Q484.8 191.5 484.5 189.5 Z" fill="#111"/>
<path d="M486.2 189.2 Q488.8 187.7 491.40000000000003 189.2 Q488.8 190.7 486.2 189.2 Z" fill="#f4f4f4"/>
<circle cx="489.1" cy="189.6" r="1.1" fill="#111"/>
<rect x="495.3" y="188.3" width="6" height="4.6" fill="#a4a4a4"/>
<path d="M496.5 188.3 v-1.6 a1.8 1.8 0 0 1 3.6 0 v1.6" fill="none" stroke="#b4b4b4" stroke-width="0.8"/>
<text x="505.6" y="192.2" font-size="7.4" fill="#222">thin</text>
<rect x="553" y="75" width="25" height="277" fill="url(#gRight)"/>
<line x1="577.5" y1="75" x2="577.5" y2="352" stroke="#8a8a8a" stroke-width="1"/>
<path d="M556.0 81 L558.5 78.5 M558.5 81 L561.0 78.5 M561.0 81 L563.5 78.5 M563.5 81 L566.0 78.5 M566.0 81 L568.5 78.5 M568.5 81 L571.0 78.5 M571.0 81 L573.5 78.5 M573.5 81 L576.0 78.5 " stroke="#c4c4c4" stroke-width="0.7"/>
<rect x="555" y="83" width="22" height="21.5" rx="1" fill="#c4c4c4"/>
<rect x="555" y="83" width="22" height="4" fill="#d4d4d4" opacity="0.6"/>
<rect x="557.8" y="85.6" width="15.2" height="14.8" rx="1.5" fill="#fbfbfb" stroke="#a8a8a8" stroke-width="0.6"/>
<rect x="560" y="86.19999999999999" width="12.6" height="1.6" fill="#111"/>
<rect x="558.4" y="86.19999999999999" width="1.4" height="1.6" fill="#fff" stroke="#888" stroke-width="0.3"/>
<rect x="557.8" y="111" width="15.2" height="14.8" rx="1.5" fill="#fbfbfb" stroke="#a8a8a8" stroke-width="0.6"/>
<rect x="560" y="111.6" width="12.6" height="1.6" fill="#111"/>
<rect x="558.4" y="111.6" width="1.4" height="1.6" fill="#fff" stroke="#888" stroke-width="0.3"/>
<rect x="557.8" y="142.4" width="15.2" height="14.8" rx="1.5" fill="#fbfbfb" stroke="#a8a8a8" stroke-width="0.6"/>
<rect x="560" y="143.0" width="12.6" height="1.6" fill="#111"/>
<rect x="558.4" y="143.0" width="1.4" height="1.6" fill="#fff" stroke="#888" stroke-width="0.3"/>
<rect x="557.8" y="168" width="15.2" height="14.8" rx="1.5" fill="#fbfbfb" stroke="#a8a8a8" stroke-width="0.6"/>
<rect x="560" y="168.6" width="12.6" height="1.6" fill="#111"/>
<rect x="558.4" y="168.6" width="1.4" height="1.6" fill="#fff" stroke="#888" stroke-width="0.3"/>
<rect x="557.8" y="193.2" width="15.2" height="14.8" rx="1.5" fill="#fbfbfb" stroke="#a8a8a8" stroke-width="0.6"/>
<rect x="560" y="193.79999999999998" width="12.6" height="1.6" fill="#111"/>
<rect x="558.4" y="193.79999999999998" width="1.4" height="1.6" fill="#fff" stroke="#888" stroke-width="0.3"/>
<path d="M562 96.5 L564 93 L570 92.5 L569 97 L563 98 Z" fill="#9a9a9a" stroke="#555" stroke-width="0.5"/>
<path d="M566 92.7 L570 92.5 L569 97 L565.5 97.5 Z" fill="#f0a0a8"/>
<circle cx="564" cy="118.5" r="2.8" fill="#ece2b0" stroke="#a89a70" stroke-width="0.5"/><circle cx="567" cy="120.8" r="2.8" fill="#ece2b0" stroke="#a89a70" stroke-width="0.5"/>
<line x1="556" y1="134.5" x2="576" y2="134.5" stroke="#b8b8b8" stroke-width="0.7" stroke-dasharray="1,1"/>
<rect x="563" y="147" width="8" height="3" rx="1" fill="#e8e8e8" stroke="#777" stroke-width="0.5"/><rect x="563" y="152" width="8" height="3" rx="1" fill="#e8e8e8" stroke="#777" stroke-width="0.5"/>
<path d="M560.5 148.5 h1 M560.5 153.5 h1" stroke="#777" stroke-width="0.8"/>
<rect x="564" y="173" width="6" height="5" fill="#555"/><path d="M561 175.5 h3" stroke="#e04040" stroke-width="0.6"/><path d="M564 172 L562 170 M564 179 L562 181" stroke="#888" stroke-width="0.4"/>
<path d="M560 198 h5 M560 200 h6 M560 202 h5 M560 204 h4 M560 206 h11" stroke="#c8c8c8" stroke-width="0.6"/>
<line x1="22" y1="352" x2="578" y2="352" stroke="#d8d8d8"/>
<text x="23.7" y="359.5" font-size="5.85" fill="#333">165.4912,-10.4216</text>
<text x="24" y="368.5" font-size="5.6" fill="#333">-</text>
<line x1="107.5" y1="353" x2="107.5" y2="372" stroke="#c8c8c8"/>
<text x="109" y="359.8" font-size="5.8" fill="#333">165.819&lt;356.3966</text>
<text x="109" y="368.5" font-size="5.6" fill="#333">-</text>
<line x1="194.7" y1="353" x2="194.7" y2="372" stroke="#c8c8c8"/>
<text x="202.5" y="364" font-size="5.6" fill="#333">Select entity or region</text>
<defs><radialGradient id="gMouse" cx="0.4" cy="0.35" r="0.7"><stop offset="0.5" stop-color="#fdfdfd"/><stop offset="1" stop-color="#c8c8c8"/></radialGradient></defs>
<ellipse cx="270" cy="362.8" rx="6.8" ry="7.8" transform="rotate(-28 270 362.8)" fill="url(#gMouse)" stroke="#b0b0b0" stroke-width="0.5"/>
<path d="M266.5 355.5 Q265.5 353.5 266.8 353" fill="none" stroke="#777" stroke-width="0.8"/>
<ellipse cx="268.7" cy="359.3" rx="1" ry="1.4" transform="rotate(-28 268.7 359.3)" fill="#3a50d0"/>
<line x1="344.2" y1="353" x2="344.2" y2="372" stroke="#c8c8c8"/>
<text x="348.7" y="364.2" font-size="5.6" fill="#333">No selected entities.</text>
<line x1="458.3" y1="353" x2="458.3" y2="372" stroke="#c8c8c8"/>
<path d="M570 371 L577 364 M573 371 L577 367" stroke="#aaa" stroke-width="0.6"/>
<rect x="22.5" y="75.5" width="21" height="21" fill="url(#gBtn)" stroke="#b0b0b0" stroke-width="1"/>
<path d="M39 94.5 L41.5 92 L41.5 94.5 Z" fill="#111"/>
<rect x="44.5" y="75.5" width="21" height="21" fill="url(#gBtn)" stroke="#b0b0b0" stroke-width="1"/>
<path d="M61 94.5 L63.5 92 L63.5 94.5 Z" fill="#111"/>
<rect x="22.5" y="97.5" width="21" height="21" fill="url(#gBtn)" stroke="#b0b0b0" stroke-width="1"/>
<path d="M39 116.5 L41.5 114 L41.5 116.5 Z" fill="#111"/>
<rect x="44.5" y="97.5" width="21" height="21" fill="url(#gBtn)" stroke="#b0b0b0" stroke-width="1"/>
<path d="M61 116.5 L63.5 114 L63.5 116.5 Z" fill="#111"/>
<rect x="22.5" y="119.5" width="21" height="21" fill="url(#gBtn)" stroke="#b0b0b0" stroke-width="1"/>
<path d="M39 138.5 L41.5 136 L41.5 138.5 Z" fill="#111"/>
<rect x="44.5" y="119.5" width="21" height="21" fill="url(#gBtn)" stroke="#b0b0b0" stroke-width="1"/>
<path d="M61 138.5 L63.5 136 L63.5 138.5 Z" fill="#111"/>
<rect x="22.5" y="141.5" width="21" height="21" fill="url(#gBtn)" stroke="#b0b0b0" stroke-width="1"/>
<path d="M39 160.5 L41.5 158 L41.5 160.5 Z" fill="#111"/>
<rect x="22.5" y="169.0" width="21" height="21" fill="url(#gBtn)" stroke="#b0b0b0" stroke-width="1"/>
<rect x="44.5" y="169.0" width="21" height="21" fill="url(#gBtn)" stroke="#b0b0b0" stroke-width="1"/>
<path d="M61 188.0 L63.5 185.5 L63.5 188.0 Z" fill="#111"/>
<rect x="22.5" y="191.0" width="21" height="21" fill="url(#gBtn)" stroke="#b0b0b0" stroke-width="1"/>
<rect x="44.5" y="191.0" width="21" height="21" fill="url(#gBtn)" stroke="#b0b0b0" stroke-width="1"/>
<rect x="22.5" y="222.3" width="21" height="21" fill="url(#gBtn)" stroke="#b0b0b0" stroke-width="1"/>
<path d="M39 241.3 L41.5 238.8 L41.5 241.3 Z" fill="#111"/>
<rect x="44.5" y="222.3" width="21" height="21" fill="url(#gBtn)" stroke="#b0b0b0" stroke-width="1"/>
<path d="M61 241.3 L63.5 238.8 L63.5 241.3 Z" fill="#111"/>
<rect x="22.5" y="244.3" width="21" height="21" fill="url(#gBtn)" stroke="#b0b0b0" stroke-width="1"/>
<path d="M39 263.3 L41.5 260.8 L41.5 263.3 Z" fill="#111"/>
<rect x="44.5" y="244.3" width="21" height="21" fill="url(#gBtn)" stroke="#b0b0b0" stroke-width="1"/>
<path d="M61 263.3 L63.5 260.8 L63.5 263.3 Z" fill="#111"/>
<rect x="22.5" y="271.0" width="21" height="22" fill="url(#gBtn)" stroke="#b0b0b0" stroke-width="1"/>
<path d="M39 291.0 L41.5 288.5 L41.5 291.0 Z" fill="#111"/>
<path d="M27.5 81.8 h3.6 M29.3 80 v3.6 M27.5 91 h3.6 M29.3 89.2 v3.6 M36.2 86.7 h3.6 M38 84.9 v3.6" stroke="#444" stroke-width="0.9"/>
<line x1="48" y1="90" x2="63" y2="82" stroke="#444" stroke-width="0.8"/>
<path d="M26 115 Q27 103 38 101" fill="none" stroke="#555" stroke-width="0.9"/>
<circle cx="55.5" cy="107.5" r="6.5" fill="none" stroke="#555" stroke-width="0.9"/>
<ellipse cx="33" cy="130" rx="9" ry="4" transform="rotate(-45 33 130)" fill="none" stroke="#555" stroke-width="0.9"/>
<path d="M57 129 C54 124 47.5 122 48.3 127 C49 132 51 138.5 53 135 C54.5 133 55.5 131 57 129 C59 126 60.5 123.5 61.8 126 C63 129 62.5 134 60.5 132.3 C59 131 58 130 57 129" fill="none" stroke="#555" stroke-width="0.9"/>
<path d="M28 147 Q26 147 26 150 L26 154 Q26 156 29 156 L36 156" fill="none" stroke="#555" stroke-width="0.9"/>
<text x="27" y="187" font-family="Liberation Serif, serif" font-size="17" fill="#111">A</text>
<path d="M49.6 184.5 V175.6 H61.2 V184.5" fill="none" stroke="#8a8a8a" stroke-width="0.9"/>
<rect x="48.8" y="174.6" width="2.4" height="2" fill="#333"/><rect x="59.8" y="174.6" width="2.4" height="2" fill="#333"/>
<path d="M27 207 L27 202 L31 197 L41 197 L41 207 Z" fill="#f4f4f4" stroke="#555" stroke-width="0.8"/>
<circle cx="35" cy="202" r="1.6" fill="#fff" stroke="#555" stroke-width="0.6"/>
<rect x="48.2" y="195.6" width="14.4" height="11.2" fill="#999"/>
<rect x="49" y="196.4" width="12.8" height="9.6" fill="#7aa6d8"/>
<path d="M49 198 L55 199 L61.8 202 L61.8 206 L49 206 Z" fill="#5a4a38"/>
<path d="M53 206 L58 201 L61.8 200 L61.8 206 Z" fill="#a89070"/>
<path d="M24.8 228.9 L24.8 240.2 L36.7 240.2 Z" fill="#b8b8b8" stroke="#888" stroke-width="0.5"/>
<path d="M26.8 233.5 L26.8 238.3 L31.5 238.3 Z" fill="#eaeaea"/>
<path d="M28.9 225.4 L34.3 231.3" stroke="#d82020" stroke-width="2"/>
<path d="M39.5 225.5 L38 240 M39.5 225.5 L41 240" fill="none" stroke="#555" stroke-width="0.7"/>
<rect x="48" y="230.7" width="14.9" height="4.8" rx="1.2" fill="#e8a868" stroke="#b87838" stroke-width="0.5"/>
<path d="M50 230.8 v1.3 M52 230.8 v1.3 M54 230.8 v1.3 M56 230.8 v1.3 M58 230.8 v1.3 M60 230.8 v1.3" stroke="#b87838" stroke-width="0.4"/>
<rect x="26.5" y="249.2" width="10.8" height="7.5" fill="#f6eecc" stroke="#aaa" stroke-width="0.6"/>
<circle cx="35.5" cy="255.1" r="4.8" fill="#f2ead0" fill-opacity="0.85" stroke="#999" stroke-width="0.6"/>
<circle cx="26.8" cy="257" r="0.8" fill="#f04040"/>
<line x1="48" y1="254.5" x2="59.5" y2="248" stroke="#f04848" stroke-width="0.9"/>
<path d="M54 253 L54 262 L56 260 L58 263 L59 262 L57.5 259 L60 259 Z" fill="#fff" stroke="#555" stroke-width="0.6"/>
<path d="M27 279 L33 276 L39 279 L39 286 L33 289 L27 286 Z M27 279 L33 282 L39 279 M33 282 L33 289" fill="none" stroke="#333" stroke-width="0.8"/>
<rect x="113.72" y="119.38" width="0.8" height="0.8" fill="#dadada"/>
<rect x="113.72" y="133.15" width="0.8" height="0.8" fill="#dadada"/>
<rect x="113.72" y="146.92" width="0.8" height="0.8" fill="#dadada"/>
<rect x="113.72" y="160.7" width="0.8" height="0.8" fill="#dadada"/>
<rect x="113.72" y="174.47" width="0.8" height="0.8" fill="#dadada"/>
<rect x="113.72" y="188.25" width="0.8" height="0.8" fill="#dadada"/>
<rect x="113.72" y="202.02" width="0.8" height="0.8" fill="#dadada"/>
<rect x="113.72" y="215.8" width="0.8" height="0.8" fill="#dadada"/>
<rect x="113.72" y="229.57" width="0.8" height="0.8" fill="#dadada"/>
<rect x="113.72" y="243.35" width="0.8" height="0.8" fill="#dadada"/>
<rect x="113.72" y="257.12" width="0.8" height="0.8" fill="#dadada"/>
<rect x="113.72" y="270.9" width="0.8" height="0.8" fill="#dadada"/>
<rect x="113.72" y="284.68" width="0.8" height="0.8" fill="#dadada"/>
<rect x="113.72" y="298.45" width="0.8" height="0.8" fill="#dadada"/>
<rect x="113.72" y="312.23" width="0.8" height="0.8" fill="#dadada"/>
<rect x="113.72" y="326" width="0.8" height="0.8" fill="#dadada"/>
<rect x="127.5" y="119.38" width="0.8" height="0.8" fill="#dadada"/>
<rect x="127.5" y="133.15" width="0.8" height="0.8" fill="#dadada"/>
<rect x="127.5" y="146.92" width="0.8" height="0.8" fill="#dadada"/>
<rect x="127.5" y="160.7" width="0.8" height="0.8" fill="#dadada"/>
<rect x="127.5" y="174.47" width="0.8" height="0.8" fill="#dadada"/>
<rect x="127.5" y="188.25" width="0.8" height="0.8" fill="#dadada"/>
<rect x="127.5" y="202.02" width="0.8" height="0.8" fill="#dadada"/>
<rect x="127.5" y="215.8" width="0.8" height="0.8" fill="#dadada"/>
<rect x="127.5" y="229.57" width="0.8" height="0.8" fill="#dadada"/>
<rect x="127.5" y="243.35" width="0.8" height="0.8" fill="#dadada"/>
<rect x="127.5" y="257.12" width="0.8" height="0.8" fill="#dadada"/>
<rect x="127.5" y="270.9" width="0.8" height="0.8" fill="#dadada"/>
<rect x="127.5" y="284.68" width="0.8" height="0.8" fill="#dadada"/>
<rect x="127.5" y="298.45" width="0.8" height="0.8" fill="#dadada"/>
<rect x="127.5" y="312.23" width="0.8" height="0.8" fill="#dadada"/>
<rect x="127.5" y="326" width="0.8" height="0.8" fill="#dadada"/>
<rect x="141.28" y="119.38" width="0.8" height="0.8" fill="#dadada"/>
<rect x="141.28" y="133.15" width="0.8" height="0.8" fill="#dadada"/>
<rect x="141.28" y="146.92" width="0.8" height="0.8" fill="#dadada"/>
<rect x="141.28" y="160.7" width="0.8" height="0.8" fill="#dadada"/>
<rect x="141.28" y="174.47" width="0.8" height="0.8" fill="#dadada"/>
<rect x="141.28" y="188.25" width="0.8" height="0.8" fill="#dadada"/>
<rect x="141.28" y="202.02" width="0.8" height="0.8" fill="#dadada"/>
<rect x="141.28" y="215.8" width="0.8" height="0.8" fill="#dadada"/>
<rect x="141.28" y="229.57" width="0.8" height="0.8" fill="#dadada"/>
<rect x="141.28" y="243.35" width="0.8" height="0.8" fill="#dadada"/>
<rect x="141.28" y="257.12" width="0.8" height="0.8" fill="#dadada"/>
<rect x="141.28" y="270.9" width="0.8" height="0.8" fill="#dadada"/>
<rect x="141.28" y="284.68" width="0.8" height="0.8" fill="#dadada"/>
<rect x="141.28" y="298.45" width="0.8" height="0.8" fill="#dadada"/>
<rect x="141.28" y="312.23" width="0.8" height="0.8" fill="#dadada"/>
<rect x="141.28" y="326" width="0.8" height="0.8" fill="#dadada"/>
<rect x="155.05" y="119.38" width="0.8" height="0.8" fill="#dadada"/>
<rect x="155.05" y="133.15" width="0.8" height="0.8" fill="#dadada"/>
<rect x="155.05" y="146.92" width="0.8" height="0.8" fill="#dadada"/>
<rect x="155.05" y="160.7" width="0.8" height="0.8" fill="#dadada"/>
<rect x="155.05" y="174.47" width="0.8" height="0.8" fill="#dadada"/>
<rect x="155.05" y="188.25" width="0.8" height="0.8" fill="#dadada"/>
<rect x="155.05" y="202.02" width="0.8" height="0.8" fill="#dadada"/>
<rect x="155.05" y="215.8" width="0.8" height="0.8" fill="#dadada"/>
<rect x="155.05" y="229.57" width="0.8" height="0.8" fill="#dadada"/>
<rect x="155.05" y="243.35" width="0.8" height="0.8" fill="#dadada"/>
<rect x="155.05" y="257.12" width="0.8" height="0.8" fill="#dadada"/>
<rect x="155.05" y="270.9" width="0.8" height="0.8" fill="#dadada"/>
<rect x="155.05" y="284.68" width="0.8" height="0.8" fill="#dadada"/>
<rect x="155.05" y="298.45" width="0.8" height="0.8" fill="#dadada"/>
<rect x="155.05" y="312.23" width="0.8" height="0.8" fill="#dadada"/>
<rect x="155.05" y="326" width="0.8" height="0.8" fill="#dadada"/>
<rect x="168.82" y="119.38" width="0.8" height="0.8" fill="#dadada"/>
<rect x="168.82" y="133.15" width="0.8" height="0.8" fill="#dadada"/>
<rect x="168.82" y="146.92" width="0.8" height="0.8" fill="#dadada"/>
<rect x="168.82" y="160.7" width="0.8" height="0.8" fill="#dadada"/>
<rect x="168.82" y="174.47" width="0.8" height="0.8" fill="#dadada"/>
<rect x="168.82" y="188.25" width="0.8" height="0.8" fill="#dadada"/>
<rect x="168.82" y="202.02" width="0.8" height="0.8" fill="#dadada"/>
<rect x="168.82" y="215.8" width="0.8" height="0.8" fill="#dadada"/>
<rect x="168.82" y="229.57" width="0.8" height="0.8" fill="#dadada"/>
<rect x="168.82" y="243.35" width="0.8" height="0.8" fill="#dadada"/>
<rect x="168.82" y="257.12" width="0.8" height="0.8" fill="#dadada"/>
<rect x="168.82" y="270.9" width="0.8" height="0.8" fill="#dadada"/>
<rect x="168.82" y="284.68" width="0.8" height="0.8" fill="#dadada"/>
<rect x="168.82" y="298.45" width="0.8" height="0.8" fill="#dadada"/>
<rect x="168.82" y="312.23" width="0.8" height="0.8" fill="#dadada"/>
<rect x="168.82" y="326" width="0.8" height="0.8" fill="#dadada"/>
<rect x="182.6" y="119.38" width="0.8" height="0.8" fill="#dadada"/>
<rect x="182.6" y="133.15" width="0.8" height="0.8" fill="#dadada"/>
<rect x="182.6" y="146.92" width="0.8" height="0.8" fill="#dadada"/>
<rect x="182.6" y="160.7" width="0.8" height="0.8" fill="#dadada"/>
<rect x="182.6" y="174.47" width="0.8" height="0.8" fill="#dadada"/>
<rect x="182.6" y="188.25" width="0.8" height="0.8" fill="#dadada"/>
<rect x="182.6" y="202.02" width="0.8" height="0.8" fill="#dadada"/>
<rect x="182.6" y="215.8" width="0.8" height="0.8" fill="#dadada"/>
<rect x="182.6" y="229.57" width="0.8" height="0.8" fill="#dadada"/>
<rect x="182.6" y="243.35" width="0.8" height="0.8" fill="#dadada"/>
<rect x="182.6" y="257.12" width="0.8" height="0.8" fill="#dadada"/>
<rect x="182.6" y="270.9" width="0.8" height="0.8" fill="#dadada"/>
<rect x="182.6" y="284.68" width="0.8" height="0.8" fill="#dadada"/>
<rect x="182.6" y="298.45" width="0.8" height="0.8" fill="#dadada"/>
<rect x="182.6" y="312.23" width="0.8" height="0.8" fill="#dadada"/>
<rect x="182.6" y="326" width="0.8" height="0.8" fill="#dadada"/>
<rect x="196.38" y="119.38" width="0.8" height="0.8" fill="#dadada"/>
<rect x="196.38" y="133.15" width="0.8" height="0.8" fill="#dadada"/>
<rect x="196.38" y="146.92" width="0.8" height="0.8" fill="#dadada"/>
<rect x="196.38" y="160.7" width="0.8" height="0.8" fill="#dadada"/>
<rect x="196.38" y="174.47" width="0.8" height="0.8" fill="#dadada"/>
<rect x="196.38" y="188.25" width="0.8" height="0.8" fill="#dadada"/>
<rect x="196.38" y="202.02" width="0.8" height="0.8" fill="#dadada"/>
<rect x="196.38" y="215.8" width="0.8" height="0.8" fill="#dadada"/>
<rect x="196.38" y="229.57" width="0.8" height="0.8" fill="#dadada"/>
<rect x="196.38" y="243.35" width="0.8" height="0.8" fill="#dadada"/>
<rect x="196.38" y="257.12" width="0.8" height="0.8" fill="#dadada"/>
<rect x="196.38" y="270.9" width="0.8" height="0.8" fill="#dadada"/>
<rect x="196.38" y="284.68" width="0.8" height="0.8" fill="#dadada"/>
<rect x="196.38" y="298.45" width="0.8" height="0.8" fill="#dadada"/>
<rect x="196.38" y="312.23" width="0.8" height="0.8" fill="#dadada"/>
<rect x="196.38" y="326" width="0.8" height="0.8" fill="#dadada"/>
<rect x="210.15" y="119.38" width="0.8" height="0.8" fill="#dadada"/>
<rect x="210.15" y="133.15" width="0.8" height="0.8" fill="#dadada"/>
<rect x="210.15" y="146.92" width="0.8" height="0.8" fill="#dadada"/>
<rect x="210.15" y="160.7" width="0.8" height="0.8" fill="#dadada"/>
<rect x="210.15" y="174.47" width="0.8" height="0.8" fill="#dadada"/>
<rect x="210.15" y="188.25" width="0.8" height="0.8" fill="#dadada"/>
<rect x="210.15" y="202.02" width="0.8" height="0.8" fill="#dadada"/>
<rect x="210.15" y="215.8" width="0.8" height="0.8" fill="#dadada"/>
<rect x="210.15" y="229.57" width="0.8" height="0.8" fill="#dadada"/>
<rect x="210.15" y="243.35" width="0.8" height="0.8" fill="#dadada"/>
<rect x="210.15" y="257.12" width="0.8" height="0.8" fill="#dadada"/>
<rect x="210.15" y="270.9" width="0.8" height="0.8" fill="#dadada"/>
<rect x="210.15" y="284.68" width="0.8" height="0.8" fill="#dadada"/>
<rect x="210.15" y="298.45" width="0.8" height="0.8" fill="#dadada"/>
<rect x="210.15" y="312.23" width="0.8" height="0.8" fill="#dadada"/>
<rect x="210.15" y="326" width="0.8" height="0.8" fill="#dadada"/>
<rect x="223.92" y="119.38" width="0.8" height="0.8" fill="#dadada"/>
<rect x="223.92" y="133.15" width="0.8" height="0.8" fill="#dadada"/>
<rect x="223.92" y="146.92" width="0.8" height="0.8" fill="#dadada"/>
<rect x="223.92" y="160.7" width="0.8" height="0.8" fill="#dadada"/>
<rect x="223.92" y="174.47" width="0.8" height="0.8" fill="#dadada"/>
<rect x="223.92" y="188.25" width="0.8" height="0.8" fill="#dadada"/>
<rect x="223.92" y="202.02" width="0.8" height="0.8" fill="#dadada"/>
<rect x="223.92" y="215.8" width="0.8" height="0.8" fill="#dadada"/>
<rect x="223.92" y="229.57" width="0.8" height="0.8" fill="#dadada"/>
<rect x="223.92" y="243.35" width="0.8" height="0.8" fill="#dadada"/>
<rect x="223.92" y="257.12" width="0.8" height="0.8" fill="#dadada"/>
<rect x="223.92" y="270.9" width="0.8" height="0.8" fill="#dadada"/>
<rect x="223.92" y="284.68" width="0.8" height="0.8" fill="#dadada"/>
<rect x="223.92" y="298.45" width="0.8" height="0.8" fill="#dadada"/>
<rect x="223.92" y="312.23" width="0.8" height="0.8" fill="#dadada"/>
<rect x="223.92" y="326" width="0.8" height="0.8" fill="#dadada"/>
<rect x="237.7" y="119.38" width="0.8" height="0.8" fill="#dadada"/>
<rect x="237.7" y="133.15" width="0.8" height="0.8" fill="#dadada"/>
<rect x="237.7" y="146.92" width="0.8" height="0.8" fill="#dadada"/>
<rect x="237.7" y="160.7" width="0.8" height="0.8" fill="#dadada"/>
<rect x="237.7" y="174.47" width="0.8" height="0.8" fill="#dadada"/>
<rect x="237.7" y="188.25" width="0.8" height="0.8" fill="#dadada"/>
<rect x="237.7" y="202.02" width="0.8" height="0.8" fill="#dadada"/>
<rect x="237.7" y="215.8" width="0.8" height="0.8" fill="#dadada"/>
<rect x="237.7" y="229.57" width="0.8" height="0.8" fill="#dadada"/>
<rect x="237.7" y="243.35" width="0.8" height="0.8" fill="#dadada"/>
<rect x="237.7" y="257.12" width="0.8" height="0.8" fill="#dadada"/>
<rect x="237.7" y="270.9" width="0.8" height="0.8" fill="#dadada"/>
<rect x="237.7" y="284.68" width="0.8" height="0.8" fill="#dadada"/>
<rect x="237.7" y="298.45" width="0.8" height="0.8" fill="#dadada"/>
<rect x="237.7" y="312.23" width="0.8" height="0.8" fill="#dadada"/>
<rect x="237.7" y="326" width="0.8" height="0.8" fill="#dadada"/>
<rect x="251.47" y="119.38" width="0.8" height="0.8" fill="#dadada"/>
<rect x="251.47" y="133.15" width="0.8" height="0.8" fill="#dadada"/>
<rect x="251.47" y="146.92" width="0.8" height="0.8" fill="#dadada"/>
<rect x="251.47" y="160.7" width="0.8" height="0.8" fill="#dadada"/>
<rect x="251.47" y="174.47" width="0.8" height="0.8" fill="#dadada"/>
<rect x="251.47" y="188.25" width="0.8" height="0.8" fill="#dadada"/>
<rect x="251.47" y="202.02" width="0.8" height="0.8" fill="#dadada"/>
<rect x="251.47" y="215.8" width="0.8" height="0.8" fill="#dadada"/>
<rect x="251.47" y="229.57" width="0.8" height="0.8" fill="#dadada"/>
<rect x="251.47" y="243.35" width="0.8" height="0.8" fill="#dadada"/>
<rect x="251.47" y="257.12" width="0.8" height="0.8" fill="#dadada"/>
<rect x="251.47" y="270.9" width="0.8" height="0.8" fill="#dadada"/>
<rect x="251.47" y="284.68" width="0.8" height="0.8" fill="#dadada"/>
<rect x="251.47" y="298.45" width="0.8" height="0.8" fill="#dadada"/>
<rect x="251.47" y="312.23" width="0.8" height="0.8" fill="#dadada"/>
<rect x="251.47" y="326" width="0.8" height="0.8" fill="#dadada"/>
<rect x="265.25" y="119.38" width="0.8" height="0.8" fill="#dadada"/>
<rect x="265.25" y="133.15" width="0.8" height="0.8" fill="#dadada"/>
<rect x="265.25" y="146.92" width="0.8" height="0.8" fill="#dadada"/>
<rect x="265.25" y="160.7" width="0.8" height="0.8" fill="#dadada"/>
<rect x="265.25" y="174.47" width="0.8" height="0.8" fill="#dadada"/>
<rect x="265.25" y="188.25" width="0.8" height="0.8" fill="#dadada"/>
<rect x="265.25" y="202.02" width="0.8" height="0.8" fill="#dadada"/>
<rect x="265.25" y="215.8" width="0.8" height="0.8" fill="#dadada"/>
<rect x="265.25" y="229.57" width="0.8" height="0.8" fill="#dadada"/>
<rect x="265.25" y="243.35" width="0.8" height="0.8" fill="#dadada"/>
<rect x="265.25" y="257.12" width="0.8" height="0.8" fill="#dadada"/>
<rect x="265.25" y="270.9" width="0.8" height="0.8" fill="#dadada"/>
<rect x="265.25" y="284.68" width="0.8" height="0.8" fill="#dadada"/>
<rect x="265.25" y="298.45" width="0.8" height="0.8" fill="#dadada"/>
<rect x="265.25" y="312.23" width="0.8" height="0.8" fill="#dadada"/>
<rect x="265.25" y="326" width="0.8" height="0.8" fill="#dadada"/>
<rect x="279.03" y="119.38" width="0.8" height="0.8" fill="#dadada"/>
<rect x="279.03" y="133.15" width="0.8" height="0.8" fill="#dadada"/>
<rect x="279.03" y="146.92" width="0.8" height="0.8" fill="#dadada"/>
<rect x="279.03" y="160.7" width="0.8" height="0.8" fill="#dadada"/>
<rect x="279.03" y="174.47" width="0.8" height="0.8" fill="#dadada"/>
<rect x="279.03" y="188.25" width="0.8" height="0.8" fill="#dadada"/>
<rect x="279.03" y="202.02" width="0.8" height="0.8" fill="#dadada"/>
<rect x="279.03" y="215.8" width="0.8" height="0.8" fill="#dadada"/>
<rect x="279.03" y="229.57" width="0.8" height="0.8" fill="#dadada"/>
<rect x="279.03" y="243.35" width="0.8" height="0.8" fill="#dadada"/>
<rect x="279.03" y="257.12" width="0.8" height="0.8" fill="#dadada"/>
<rect x="279.03" y="270.9" width="0.8" height="0.8" fill="#dadada"/>
<rect x="279.03" y="284.68" width="0.8" height="0.8" fill="#dadada"/>
<rect x="279.03" y="298.45" width="0.8" height="0.8" fill="#dadada"/>
<rect x="279.03" y="312.23" width="0.8" height="0.8" fill="#dadada"/>
<rect x="279.03" y="326" width="0.8" height="0.8" fill="#dadada"/>
<rect x="292.8" y="119.38" width="0.8" height="0.8" fill="#dadada"/>
<rect x="292.8" y="133.15" width="0.8" height="0.8" fill="#dadada"/>
<rect x="292.8" y="146.92" width="0.8" height="0.8" fill="#dadada"/>
<rect x="292.8" y="160.7" width="0.8" height="0.8" fill="#dadada"/>
<rect x="292.8" y="174.47" width="0.8" height="0.8" fill="#dadada"/>
<rect x="292.8" y="188.25" width="0.8" height="0.8" fill="#dadada"/>
<rect x="292.8" y="202.02" width="0.8" height="0.8" fill="#dadada"/>
<rect x="292.8" y="215.8" width="0.8" height="0.8" fill="#dadada"/>
<rect x="292.8" y="229.57" width="0.8" height="0.8" fill="#dadada"/>
<rect x="292.8" y="243.35" width="0.8" height="0.8" fill="#dadada"/>
<rect x="292.8" y="257.12" width="0.8" height="0.8" fill="#dadada"/>
<rect x="292.8" y="270.9" width="0.8" height="0.8" fill="#dadada"/>
<rect x="292.8" y="284.68" width="0.8" height="0.8" fill="#dadada"/>
<rect x="292.8" y="298.45" width="0.8" height="0.8" fill="#dadada"/>
<rect x="292.8" y="312.23" width="0.8" height="0.8" fill="#dadada"/>
<rect x="292.8" y="326" width="0.8" height="0.8" fill="#dadada"/>
<rect x="306.58" y="119.38" width="0.8" height="0.8" fill="#dadada"/>
<rect x="306.58" y="133.15" width="0.8" height="0.8" fill="#dadada"/>
<rect x="306.58" y="146.92" width="0.8" height="0.8" fill="#dadada"/>
<rect x="306.58" y="160.7" width="0.8" height="0.8" fill="#dadada"/>
<rect x="306.58" y="174.47" width="0.8" height="0.8" fill="#dadada"/>
<rect x="306.58" y="188.25" width="0.8" height="0.8" fill="#dadada"/>
<rect x="306.58" y="202.02" width="0.8" height="0.8" fill="#dadada"/>
<rect x="306.58" y="215.8" width="0.8" height="0.8" fill="#dadada"/>
<rect x="306.58" y="229.57" width="0.8" height="0.8" fill="#dadada"/>
<rect x="306.58" y="243.35" width="0.8" height="0.8" fill="#dadada"/>
<rect x="306.58" y="257.12" width="0.8" height="0.8" fill="#dadada"/>
<rect x="306.58" y="270.9" width="0.8" height="0.8" fill="#dadada"/>
<rect x="306.58" y="284.68" width="0.8" height="0.8" fill="#dadada"/>
<rect x="306.58" y="298.45" width="0.8" height="0.8" fill="#dadada"/>
<rect x="306.58" y="312.23" width="0.8" height="0.8" fill="#dadada"/>
<rect x="306.58" y="326" width="0.8" height="0.8" fill="#dadada"/>
<rect x="320.35" y="119.38" width="0.8" height="0.8" fill="#dadada"/>
<rect x="320.35" y="133.15" width="0.8" height="0.8" fill="#dadada"/>
<rect x="320.35" y="146.92" width="0.8" height="0.8" fill="#dadada"/>
<rect x="320.35" y="160.7" width="0.8" height="0.8" fill="#dadada"/>
<rect x="320.35" y="174.47" width="0.8" height="0.8" fill="#dadada"/>
<rect x="320.35" y="188.25" width="0.8" height="0.8" fill="#dadada"/>
<rect x="320.35" y="202.02" width="0.8" height="0.8" fill="#dadada"/>
<rect x="320.35" y="215.8" width="0.8" height="0.8" fill="#dadada"/>
<rect x="320.35" y="229.57" width="0.8" height="0.8" fill="#dadada"/>
<rect x="320.35" y="243.35" width="0.8" height="0.8" fill="#dadada"/>
<rect x="320.35" y="257.12" width="0.8" height="0.8" fill="#dadada"/>
<rect x="320.35" y="270.9" width="0.8" height="0.8" fill="#dadada"/>
<rect x="320.35" y="284.68" width="0.8" height="0.8" fill="#dadada"/>
<rect x="320.35" y="298.45" width="0.8" height="0.8" fill="#dadada"/>
<rect x="320.35" y="312.23" width="0.8" height="0.8" fill="#dadada"/>
<rect x="320.35" y="326" width="0.8" height="0.8" fill="#dadada"/>
<rect x="334.12" y="119.38" width="0.8" height="0.8" fill="#dadada"/>
<rect x="334.12" y="133.15" width="0.8" height="0.8" fill="#dadada"/>
<rect x="334.12" y="146.92" width="0.8" height="0.8" fill="#dadada"/>
<rect x="334.12" y="160.7" width="0.8" height="0.8" fill="#dadada"/>
<rect x="334.12" y="174.47" width="0.8" height="0.8" fill="#dadada"/>
<rect x="334.12" y="188.25" width="0.8" height="0.8" fill="#dadada"/>
<rect x="334.12" y="202.02" width="0.8" height="0.8" fill="#dadada"/>
<rect x="334.12" y="215.8" width="0.8" height="0.8" fill="#dadada"/>
<rect x="334.12" y="229.57" width="0.8" height="0.8" fill="#dadada"/>
<rect x="334.12" y="243.35" width="0.8" height="0.8" fill="#dadada"/>
<rect x="334.12" y="257.12" width="0.8" height="0.8" fill="#dadada"/>
<rect x="334.12" y="270.9" width="0.8" height="0.8" fill="#dadada"/>
<rect x="334.12" y="284.68" width="0.8" height="0.8" fill="#dadada"/>
<rect x="334.12" y="298.45" width="0.8" height="0.8" fill="#dadada"/>
<rect x="334.12" y="312.23" width="0.8" height="0.8" fill="#dadada"/>
<rect x="334.12" y="326" width="0.8" height="0.8" fill="#dadada"/>
<rect x="347.9" y="119.38" width="0.8" height="0.8" fill="#dadada"/>
<rect x="347.9" y="133.15" width="0.8" height="0.8" fill="#dadada"/>
<rect x="347.9" y="146.92" width="0.8" height="0.8" fill="#dadada"/>
<rect x="347.9" y="160.7" width="0.8" height="0.8" fill="#dadada"/>
<rect x="347.9" y="174.47" width="0.8" height="0.8" fill="#dadada"/>
<rect x="347.9" y="188.25" width="0.8" height="0.8" fill="#dadada"/>
<rect x="347.9" y="202.02" width="0.8" height="0.8" fill="#dadada"/>
<rect x="347.9" y="215.8" width="0.8" height="0.8" fill="#dadada"/>
<rect x="347.9" y="229.57" width="0.8" height="0.8" fill="#dadada"/>
<rect x="347.9" y="243.35" width="0.8" height="0.8" fill="#dadada"/>
<rect x="347.9" y="257.12" width="0.8" height="0.8" fill="#dadada"/>
<rect x="347.9" y="270.9" width="0.8" height="0.8" fill="#dadada"/>
<rect x="347.9" y="284.68" width="0.8" height="0.8" fill="#dadada"/>
<rect x="347.9" y="298.45" width="0.8" height="0.8" fill="#dadada"/>
<rect x="347.9" y="312.23" width="0.8" height="0.8" fill="#dadada"/>
<rect x="347.9" y="326" width="0.8" height="0.8" fill="#dadada"/>
<rect x="361.68" y="119.38" width="0.8" height="0.8" fill="#dadada"/>
<rect x="361.68" y="133.15" width="0.8" height="0.8" fill="#dadada"/>
<rect x="361.68" y="146.92" width="0.8" height="0.8" fill="#dadada"/>
<rect x="361.68" y="160.7" width="0.8" height="0.8" fill="#dadada"/>
<rect x="361.68" y="174.47" width="0.8" height="0.8" fill="#dadada"/>
<rect x="361.68" y="188.25" width="0.8" height="0.8" fill="#dadada"/>
<rect x="361.68" y="202.02" width="0.8" height="0.8" fill="#dadada"/>
<rect x="361.68" y="215.8" width="0.8" height="0.8" fill="#dadada"/>
<rect x="361.68" y="229.57" width="0.8" height="0.8" fill="#dadada"/>
<rect x="361.68" y="243.35" width="0.8" height="0.8" fill="#dadada"/>
<rect x="361.68" y="257.12" width="0.8" height="0.8" fill="#dadada"/>
<rect x="361.68" y="270.9" width="0.8" height="0.8" fill="#dadada"/>
<rect x="361.68" y="284.68" width="0.8" height="0.8" fill="#dadada"/>
<rect x="361.68" y="298.45" width="0.8" height="0.8" fill="#dadada"/>
<rect x="361.68" y="312.23" width="0.8" height="0.8" fill="#dadada"/>
<rect x="361.68" y="326" width="0.8" height="0.8" fill="#dadada"/>
<rect x="375.45" y="119.38" width="0.8" height="0.8" fill="#dadada"/>
<rect x="375.45" y="133.15" width="0.8" height="0.8" fill="#dadada"/>
<rect x="375.45" y="146.92" width="0.8" height="0.8" fill="#dadada"/>
<rect x="375.45" y="160.7" width="0.8" height="0.8" fill="#dadada"/>
<rect x="375.45" y="174.47" width="0.8" height="0.8" fill="#dadada"/>
<rect x="375.45" y="188.25" width="0.8" height="0.8" fill="#dadada"/>
<rect x="375.45" y="202.02" width="0.8" height="0.8" fill="#dadada"/>
<rect x="375.45" y="215.8" width="0.8" height="0.8" fill="#dadada"/>
<rect x="375.45" y="229.57" width="0.8" height="0.8" fill="#dadada"/>
<rect x="375.45" y="243.35" width="0.8" height="0.8" fill="#dadada"/>
<rect x="375.45" y="257.12" width="0.8" height="0.8" fill="#dadada"/>
<rect x="375.45" y="270.9" width="0.8" height="0.8" fill="#dadada"/>
<rect x="375.45" y="284.68" width="0.8" height="0.8" fill="#dadada"/>
<rect x="375.45" y="298.45" width="0.8" height="0.8" fill="#dadada"/>
<rect x="375.45" y="312.23" width="0.8" height="0.8" fill="#dadada"/>
<rect x="375.45" y="326" width="0.8" height="0.8" fill="#dadada"/>
<rect x="389.23" y="119.38" width="0.8" height="0.8" fill="#dadada"/>
<rect x="389.23" y="133.15" width="0.8" height="0.8" fill="#dadada"/>
<rect x="389.23" y="146.92" width="0.8" height="0.8" fill="#dadada"/>
<rect x="389.23" y="160.7" width="0.8" height="0.8" fill="#dadada"/>
<rect x="389.23" y="174.47" width="0.8" height="0.8" fill="#dadada"/>
<rect x="389.23" y="188.25" width="0.8" height="0.8" fill="#dadada"/>
<rect x="389.23" y="202.02" width="0.8" height="0.8" fill="#dadada"/>
<rect x="389.23" y="215.8" width="0.8" height="0.8" fill="#dadada"/>
<rect x="389.23" y="229.57" width="0.8" height="0.8" fill="#dadada"/>
<rect x="389.23" y="243.35" width="0.8" height="0.8" fill="#dadada"/>
<rect x="389.23" y="257.12" width="0.8" height="0.8" fill="#dadada"/>
<rect x="389.23" y="270.9" width="0.8" height="0.8" fill="#dadada"/>
<rect x="389.23" y="284.68" width="0.8" height="0.8" fill="#dadada"/>
<rect x="389.23" y="298.45" width="0.8" height="0.8" fill="#dadada"/>
<rect x="389.23" y="312.23" width="0.8" height="0.8" fill="#dadada"/>
<rect x="389.23" y="326" width="0.8" height="0.8" fill="#dadada"/>
<rect x="403" y="119.38" width="0.8" height="0.8" fill="#dadada"/>
<rect x="403" y="133.15" width="0.8" height="0.8" fill="#dadada"/>
<rect x="403" y="146.92" width="0.8" height="0.8" fill="#dadada"/>
<rect x="403" y="160.7" width="0.8" height="0.8" fill="#dadada"/>
<rect x="403" y="174.47" width="0.8" height="0.8" fill="#dadada"/>
<rect x="403" y="188.25" width="0.8" height="0.8" fill="#dadada"/>
<rect x="403" y="202.02" width="0.8" height="0.8" fill="#dadada"/>
<rect x="403" y="215.8" width="0.8" height="0.8" fill="#dadada"/>
<rect x="403" y="229.57" width="0.8" height="0.8" fill="#dadada"/>
<rect x="403" y="243.35" width="0.8" height="0.8" fill="#dadada"/>
<rect x="403" y="257.12" width="0.8" height="0.8" fill="#dadada"/>
<rect x="403" y="270.9" width="0.8" height="0.8" fill="#dadada"/>
<rect x="403" y="284.68" width="0.8" height="0.8" fill="#dadada"/>
<rect x="403" y="298.45" width="0.8" height="0.8" fill="#dadada"/>
<rect x="403" y="312.23" width="0.8" height="0.8" fill="#dadada"/>
<rect x="403" y="326" width="0.8" height="0.8" fill="#dadada"/>
<rect x="416.77" y="119.38" width="0.8" height="0.8" fill="#dadada"/>
<rect x="416.77" y="133.15" width="0.8" height="0.8" fill="#dadada"/>
<rect x="416.77" y="146.92" width="0.8" height="0.8" fill="#dadada"/>
<rect x="416.77" y="160.7" width="0.8" height="0.8" fill="#dadada"/>
<rect x="416.77" y="174.47" width="0.8" height="0.8" fill="#dadada"/>
<rect x="416.77" y="188.25" width="0.8" height="0.8" fill="#dadada"/>
<rect x="416.77" y="202.02" width="0.8" height="0.8" fill="#dadada"/>
<rect x="416.77" y="215.8" width="0.8" height="0.8" fill="#dadada"/>
<rect x="416.77" y="229.57" width="0.8" height="0.8" fill="#dadada"/>
<rect x="416.77" y="243.35" width="0.8" height="0.8" fill="#dadada"/>
<rect x="416.77" y="257.12" width="0.8" height="0.8" fill="#dadada"/>
<rect x="416.77" y="270.9" width="0.8" height="0.8" fill="#dadada"/>
<rect x="416.77" y="284.68" width="0.8" height="0.8" fill="#dadada"/>
<rect x="416.77" y="298.45" width="0.8" height="0.8" fill="#dadada"/>
<rect x="416.77" y="312.23" width="0.8" height="0.8" fill="#dadada"/>
<rect x="416.77" y="326" width="0.8" height="0.8" fill="#dadada"/>
<rect x="430.55" y="119.38" width="0.8" height="0.8" fill="#dadada"/>
<rect x="430.55" y="133.15" width="0.8" height="0.8" fill="#dadada"/>
<rect x="430.55" y="146.92" width="0.8" height="0.8" fill="#dadada"/>
<rect x="430.55" y="160.7" width="0.8" height="0.8" fill="#dadada"/>
<rect x="430.55" y="174.47" width="0.8" height="0.8" fill="#dadada"/>
<rect x="430.55" y="188.25" width="0.8" height="0.8" fill="#dadada"/>
<rect x="430.55" y="202.02" width="0.8" height="0.8" fill="#dadada"/>
<rect x="430.55" y="215.8" width="0.8" height="0.8" fill="#dadada"/>
<rect x="430.55" y="229.57" width="0.8" height="0.8" fill="#dadada"/>
<rect x="430.55" y="243.35" width="0.8" height="0.8" fill="#dadada"/>
<rect x="430.55" y="257.12" width="0.8" height="0.8" fill="#dadada"/>
<rect x="430.55" y="270.9" width="0.8" height="0.8" fill="#dadada"/>
<rect x="430.55" y="284.68" width="0.8" height="0.8" fill="#dadada"/>
<rect x="430.55" y="298.45" width="0.8" height="0.8" fill="#dadada"/>
<rect x="430.55" y="312.23" width="0.8" height="0.8" fill="#dadada"/>
<rect x="430.55" y="326" width="0.8" height="0.8" fill="#dadada"/>
<clipPath id="pc"><rect x="112.7" y="106.7" width="327.8" height="231"/></clipPath>
<g stroke="#d8d8d8" opacity="0.8"><line x1="183" y1="101" x2="183" y2="343" stroke-width="0.7"/><line x1="320.75" y1="101" x2="320.75" y2="343" stroke-width="0.7"/><line x1="458.5" y1="101" x2="458.5" y2="343" stroke-width="0.7"/><line x1="81" y1="161.1" x2="472" y2="161.1" stroke-width="0.7"/><line x1="81" y1="298.85" x2="472" y2="298.85" stroke-width="0.7"/></g>
<g stroke="#ebebeb" clip-path="url(#pc)"><line x1="183" y1="101" x2="183" y2="343" stroke-width="0.7"/><line x1="320.75" y1="101" x2="320.75" y2="343" stroke-width="0.7"/><line x1="458.5" y1="101" x2="458.5" y2="343" stroke-width="0.7"/><line x1="81" y1="161.1" x2="472" y2="161.1" stroke-width="0.7"/><line x1="81" y1="298.85" x2="472" y2="298.85" stroke-width="0.7"/></g>
<rect x="123.9" y="117.7" width="304.9" height="208.8" fill="none" stroke="#a8a8ff" stroke-width="1"/>
<rect x="128.2" y="119.4" width="293.5" height="206.8" fill="none" stroke="#6a6a6a" stroke-width="1.1"/>
<path d="M171.5 160.5 h23 M183 149.5 v23" stroke="#ff4a4a" stroke-width="0.8"/>
<circle cx="238.3" cy="175.2" r="27.7" fill="none" stroke="#b4b4b4" stroke-width="2.6"/>
<circle cx="238.3" cy="175.2" r="29.2" fill="none" stroke="#444" stroke-width="0.7"/>
<circle cx="238.3" cy="175.2" r="26.3" fill="none" stroke="#555" stroke-width="0.7"/>
<circle cx="238.3" cy="175.2" r="19.9" fill="none" stroke="#b4b4b4" stroke-width="2.6"/>
<circle cx="238.3" cy="175.2" r="21.4" fill="none" stroke="#444" stroke-width="0.7"/>
<circle cx="238.3" cy="175.2" r="18.5" fill="none" stroke="#555" stroke-width="0.7"/>
<circle cx="238.3" cy="175.2" r="24.2" fill="none" stroke="#ff4040" stroke-width="0.7"/>
<path d="M222.6 150.6 L193.2 169.3 A7 7 0 0 0 193.2 181.1 L222.6 199.8" fill="none" stroke="#333" stroke-width="0.7"/>
<path d="M254 150.6 L283.4 169.3 A7 7 0 0 1 283.4 181.1 L254 199.8" fill="none" stroke="#333" stroke-width="0.7"/>
<ellipse cx="197" cy="175.2" rx="1.7" ry="4" fill="#ccc" stroke="#333" stroke-width="0.8"/>
<ellipse cx="279.6" cy="175.2" rx="1.7" ry="4" fill="#ccc" stroke="#333" stroke-width="0.8"/>
<path d="M197 167.3 V181.5 M279.6 167.3 V181.5" stroke="#ff4040" stroke-width="0.6"/>
<path d="M187.2 175.2 h103 M238.3 142 v66" stroke="#ff3838" stroke-width="0.8"/>
<circle cx="262.5" cy="175.2" r="1.3" fill="#a01818"/>
<circle cx="255.41" cy="192.31" r="1.3" fill="#a01818"/>
<circle cx="238.3" cy="199.4" r="1.3" fill="#a01818"/>
<circle cx="221.19" cy="192.31" r="1.3" fill="#a01818"/>
<circle cx="214.1" cy="175.2" r="1.3" fill="#a01818"/>
<circle cx="221.19" cy="158.09" r="1.3" fill="#a01818"/>
<circle cx="238.3" cy="151" r="1.3" fill="#a01818"/>
<circle cx="255.41" cy="158.09" r="1.3" fill="#a01818"/>
<path d="M209.3 185 V218 M267.3 185 V218 M209.3 216.6 H267.3 M197 185 V232 M279.6 185 V232 M197 230.6 H279.6" stroke="#a8a8a8" stroke-width="0.5" fill="none"/>
<text x="238.3" y="214.5" font-size="5" fill="#a0a0a0" text-anchor="middle">42</text>
<text x="238.3" y="228.5" font-size="5" fill="#a0a0a0" text-anchor="middle">60</text>
<path d="M219 182 L264 171" stroke="#b4b4b4" stroke-width="0.4"/>
<text x="236" y="178" font-size="4" fill="#bbb">30</text>
<path d="M279.6 153 V185 M271.8 157.3 H287.5 M300.7 164 V186 M286.8 171 H302.5 M286.8 179 H302.5 M285.5 179.8 L293 187.3" stroke="#acacac" stroke-width="0.45" fill="none"/>
<path d="M271.8 157.3 l2 -0.8 v1.6 z M287.5 157.3 l-2 -0.8 v1.6 z M300.7 171 l-0.8 -2 h1.6 z M300.7 179 l-0.8 2 h1.6 z" fill="#aaa"/>
<text x="0" y="0" font-size="3.6" fill="#aaa" transform="translate(299.3 177) rotate(-90)">4</text>
<text x="0" y="0" font-size="3.6" fill="#aaa" transform="translate(290 187) rotate(-55)">25</text>
<text x="277.8" y="155.5" font-size="3.2" fill="#aaa">5</text>
<clipPath id="hc"><rect x="327.3" y="146" width="35.3" height="10"/></clipPath>
<g clip-path="url(#hc)"><line x1="318" y1="157" x2="330" y2="145" stroke="#444" stroke-width="0.55"/><line x1="321.6" y1="157" x2="333.6" y2="145" stroke="#444" stroke-width="0.55"/><line x1="325.2" y1="157" x2="337.2" y2="145" stroke="#444" stroke-width="0.55"/><line x1="328.8" y1="157" x2="340.8" y2="145" stroke="#444" stroke-width="0.55"/><line x1="332.4" y1="157" x2="344.4" y2="145" stroke="#444" stroke-width="0.55"/><line x1="336" y1="157" x2="348" y2="145" stroke="#444" stroke-width="0.55"/><line x1="339.6" y1="157" x2="351.6" y2="145" stroke="#444" stroke-width="0.55"/><line x1="343.2" y1="157" x2="355.2" y2="145" stroke="#444" stroke-width="0.55"/><line x1="346.8" y1="157" x2="358.8" y2="145" stroke="#444" stroke-width="0.55"/><line x1="350.4" y1="157" x2="362.4" y2="145" stroke="#444" stroke-width="0.55"/><line x1="354" y1="157" x2="366" y2="145" stroke="#444" stroke-width="0.55"/><line x1="357.6" y1="157" x2="369.6" y2="145" stroke="#444" stroke-width="0.55"/><line x1="361.2" y1="157" x2="373.2" y2="145" stroke="#444" stroke-width="0.55"/><line x1="364.8" y1="157" x2="376.8" y2="145" stroke="#444" stroke-width="0.55"/></g>
<path d="M327.3 146 H360.5 L362.6 148 V204.3 H327.3 Z" fill="none" stroke="#333" stroke-width="0.8"/>
<path d="M327.3 156 H362.6 M327.3 174.8 H362.6 M336.5 174.8 V204.3 M327.3 178.5 H336.5 M327.3 179.5 H336.5" stroke="#333" stroke-width="0.6"/>
<path d="M347 151 H367 M343 158 H367 M324 174.8 H328 M361 174.8 H367 M324 178.5 H339 M343 192 H367 M343 199 H367" stroke="#f04848" stroke-width="0.55"/>
<path d="M345 151 l2.5 -1 v2 z" fill="#333"/>
<path d="M210.4 259.8 Q208.5 253 214.7 249.3 L246.3 245 L248.8 247.4 L224 261 L211.5 256.5" fill="none" stroke="#333" stroke-width="0.6"/>
<path d="M248.6 247.6 V255.6 L224.3 268.5 V260.8" fill="none" stroke="#333" stroke-width="0.6"/>
<path d="M214 257.5 L230.2 248.7" fill="none" stroke="#333" stroke-width="0.6"/>
<circle cx="213.6" cy="255.6" r="1.5" fill="none" stroke="#333" stroke-width="0.5"/>
<clipPath id="tb"><path d="M224.3 260.6 L248.4 248 V255.6 L224.3 268.5 Z"/></clipPath>
<g clip-path="url(#tb)"><line x1="215" y1="245" x2="240" y2="270" stroke="#444" stroke-width="0.5"/><line x1="218" y1="245" x2="243" y2="270" stroke="#444" stroke-width="0.5"/><line x1="221" y1="245" x2="246" y2="270" stroke="#444" stroke-width="0.5"/><line x1="224" y1="245" x2="249" y2="270" stroke="#444" stroke-width="0.5"/><line x1="227" y1="245" x2="252" y2="270" stroke="#444" stroke-width="0.5"/><line x1="230" y1="245" x2="255" y2="270" stroke="#444" stroke-width="0.5"/><line x1="233" y1="245" x2="258" y2="270" stroke="#444" stroke-width="0.5"/><line x1="236" y1="245" x2="261" y2="270" stroke="#444" stroke-width="0.5"/><line x1="239" y1="245" x2="264" y2="270" stroke="#444" stroke-width="0.5"/><line x1="242" y1="245" x2="267" y2="270" stroke="#444" stroke-width="0.5"/><line x1="245" y1="245" x2="270" y2="270" stroke="#444" stroke-width="0.5"/><line x1="248" y1="245" x2="273" y2="270" stroke="#444" stroke-width="0.5"/><line x1="251" y1="245" x2="276" y2="270" stroke="#444" stroke-width="0.5"/><line x1="254" y1="245" x2="279" y2="270" stroke="#444" stroke-width="0.5"/></g>
<path d="M210.4 259.8 C205 265 203.5 275 206.7 283 C209.5 293 215 301 225.3 308.4 C230 311.2 235.5 311.5 238.9 309.7 L263.5 297.8 L275.9 296.5 L282.7 292" fill="none" stroke="#333" stroke-width="0.6"/>
<path d="M222.8 266.6 C216 267.5 211 273 210 280.9 C210.5 290 218 300 226.5 302.8 C231 304 236 303.5 238.9 296 L239.5 292.9" fill="none" stroke="#333" stroke-width="0.6"/>
<path d="M221 264 C213 265.5 208.5 272 208 281 C208.5 292 216 302 226 305.5 C232 307.5 238 306 240 300" fill="none" stroke="#555" stroke-width="0.5"/>
<path d="M212.9 263.5 C209 268 207 275 208.2 282 C210 292 216 302 225 306.5 C231 308.8 237.5 308.5 241.2 298.5" fill="none" stroke="#ff4040" stroke-width="0.6"/>
<path d="M211.8 261.5 C207 266 205.5 275 208.2 283 C211 293 216.5 300.5 225.8 306.8 C230 309.5 235.5 309.5 238.6 307.5" fill="none" stroke="#666" stroke-width="0.45"/>
<path d="M235.2 266 Q237.5 279 247.4 286.6" fill="none" stroke="#333" stroke-width="0.6"/>
<path d="M263.5 287.8 Q262.5 294 259.2 297.8" fill="none" stroke="#333" stroke-width="0.6"/>
<path d="M239.3 291.6 L262.3 279.2 L282.7 291 V292.5 L279.6 295.9 L262.9 287.2 L241.2 295.9 Z M262.3 279.2 V287.2" fill="none" stroke="#333" stroke-width="0.6"/>
<line x1="241.86" y1="290.22" x2="241.86" y2="294.93" stroke="#555" stroke-width="0.4"/>
<line x1="244.41" y1="288.84" x2="244.41" y2="293.97" stroke="#555" stroke-width="0.4"/>
<line x1="246.97" y1="287.47" x2="246.97" y2="293" stroke="#555" stroke-width="0.4"/>
<line x1="249.52" y1="286.09" x2="249.52" y2="292.03" stroke="#555" stroke-width="0.4"/>
<line x1="252.08" y1="284.71" x2="252.08" y2="291.07" stroke="#555" stroke-width="0.4"/>
<line x1="254.63" y1="283.33" x2="254.63" y2="290.1" stroke="#555" stroke-width="0.4"/>
<line x1="257.19" y1="281.96" x2="257.19" y2="289.13" stroke="#555" stroke-width="0.4"/>
<line x1="259.74" y1="280.58" x2="259.74" y2="288.17" stroke="#555" stroke-width="0.4"/>
<line x1="264.55" y1="280.68" x2="264.55" y2="288.29" stroke="#555" stroke-width="0.4"/>
<line x1="266.8" y1="282.15" x2="266.8" y2="289.38" stroke="#555" stroke-width="0.4"/>
<line x1="269.05" y1="283.62" x2="269.05" y2="290.46" stroke="#555" stroke-width="0.4"/>
<line x1="271.3" y1="285.1" x2="271.3" y2="291.55" stroke="#555" stroke-width="0.4"/>
<line x1="273.55" y1="286.57" x2="273.55" y2="292.64" stroke="#555" stroke-width="0.4"/>
<line x1="275.8" y1="288.05" x2="275.8" y2="293.72" stroke="#555" stroke-width="0.4"/>
<line x1="278.05" y1="289.52" x2="278.05" y2="294.81" stroke="#555" stroke-width="0.4"/>
<circle cx="272.2" cy="292.8" r="1.3" fill="none" stroke="#333" stroke-width="0.5"/>
<path d="M224 258 V312.7 M201.1 271.6 L248.2 299.1 M224 285.1 L252.5 269.1 M224 265.4 L237.7 258 M240.6 294.7 L254.2 288.2 M270.3 292.8 L280.8 286.6" stroke="#ff4040" stroke-width="0.6"/>
<circle cx="207.9" cy="275.6" r="1" fill="#a01818"/>
<circle cx="212.3" cy="292.3" r="1" fill="#a01818"/>
<circle cx="224.6" cy="304.7" r="1" fill="#a01818"/>
<circle cx="236.4" cy="306.6" r="1" fill="#a01818"/>
<circle cx="212.9" cy="264.8" r="1" fill="#a01818"/>
<circle cx="224" cy="265.4" r="1" fill="#a01818"/>
<circle cx="240.7" cy="295.4" r="1" fill="#a01818"/>
<path d="M338 326 V284.7 H421.7 M338 291.7 H406.3 M338 298.7 H421.7 M406.3 284.7 V298.7 M394 298.7 V326 M394 305.8 H421.7 M394 312.5 H421.7 M394 319.7 H421.7 M407.5 319.7 V326" fill="none" stroke="#333" stroke-width="0.8"/>
<text x="342.5" y="316.5" font-size="10.1" fill="#222">Flange</text>
<text x="340" y="297" font-size="4" fill="#333">^ JW/21/07 &lt;</text>
<circle cx="410.5" cy="292" r="2.6" fill="none" stroke="#222" stroke-width="1"/>
<circle cx="410.5" cy="292" r="1" fill="#222"/>
<path d="M413.5 292 L416 288.5 L419.5 292 L416 295.5 Z" fill="#222"/>
<path d="M409 292 H420" stroke="#222" stroke-width="0.6"/>
<text x="396" y="304" font-size="3.5" fill="#333">tm</text>
<text x="396" y="310.5" font-size="3.5" fill="#666">JW/21/</text>
<text x="396" y="317.5" font-size="3.5" font-weight="bold" fill="#333">A. Mustn</text>
<text x="396" y="324.5" font-size="3.5" fill="#333">Ter 1</text>
<text x="361" y="324.2" font-size="3" fill="#444">xxx00oo oo oo oo</text>
</svg>
</body></html>
